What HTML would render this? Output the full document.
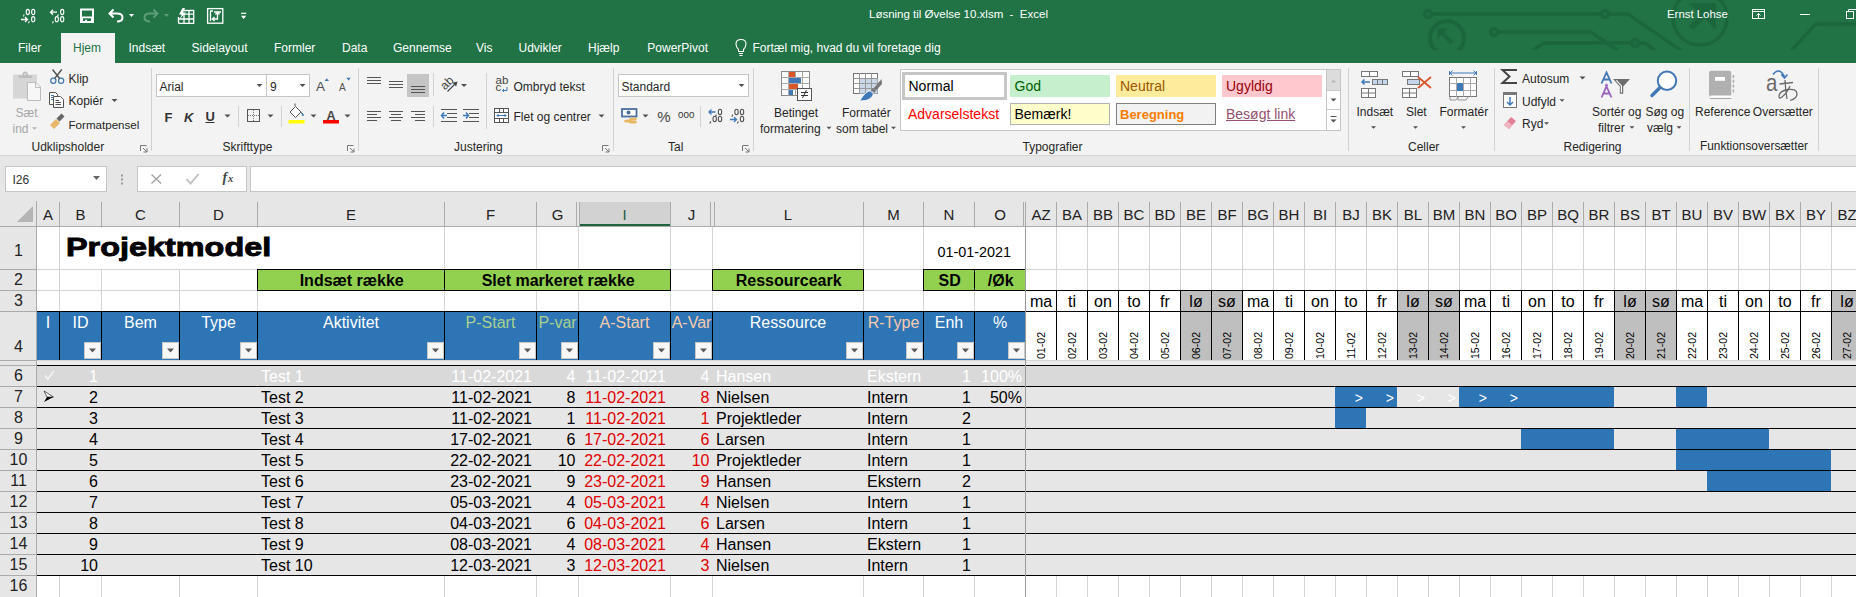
<!DOCTYPE html><html><head><meta charset="utf-8"><style>
html,body{margin:0;padding:0;}
body{width:1856px;height:597px;overflow:hidden;position:relative;font-family:"Liberation Sans", sans-serif;background:#fff;}
div{box-sizing:border-box;}
svg{position:absolute;overflow:visible;}
</style></head><body>
<div style="position:absolute;left:0px;top:0px;width:1856px;height:63px;background:#217346;"></div>
<svg style="left:0;top:0" width="1856" height="63" viewBox="0 0 1856 63">
<defs><clipPath id="cp"><rect x="0" y="0" width="1856" height="50"/></clipPath></defs>
<g clip-path="url(#cp)" fill="none" stroke="#1c663d" stroke-width="3.4">
<polyline points="1428,14 1605,14 1628,14 1683,52"/>
<circle cx="1428" cy="14" r="3.5" fill="#217346"/>
<circle cx="1605" cy="14" r="3.5" fill="#217346"/>
<circle cx="1447" cy="38" r="17" stroke-width="4"/>
<path d="M1440 31 L1452 43" stroke-width="4"/><path d="M1437.5 28.5 H1448 L1437.5 39 Z" fill="#1c663d" stroke="none"/>
<polyline points="1494,32 1591,32 1620,52"/>
<circle cx="1494" cy="32" r="3.5" fill="#217346"/>
<polyline points="1530,52 1544,43 1635,43 1645,43 1657,52"/>
<circle cx="1635" cy="43" r="3.5" fill="#217346"/>
<circle cx="1700" cy="18" r="27"/>
<path d="M1689 3 H1716 V30 Z" fill="#1c663d" stroke="none"/><path d="M1704 15 L1691 28" stroke-width="6"/>
<polyline points="1790,52 1816,24 1856,24"/>
</g></svg>
<svg style="left:0;top:0" width="260" height="32" viewBox="0 0 260 32">
<g fill="none" stroke="#ffffff" stroke-width="1.1">
<ellipse cx="27.8" cy="12" rx="1.6" ry="2.6"/><ellipse cx="33.2" cy="12" rx="1.6" ry="2.6"/>
<path d="M24.3 14.5 Q23.5 15.5 23.5 16.5"/>
<path d="M21 19.5 H27.5 M25 17 L27.5 19.5 L25 22" stroke-width="1.3"/>
<path d="M29.5 21.3 Q28.5 22.5 28.5 23.3"/>
<ellipse cx="33.2" cy="19.2" rx="1.6" ry="2.6"/>
<path d="M57 12.2 H50.5 M53 9.7 L50.5 12.2 L53 14.7" stroke-width="1.3"/>
<ellipse cx="62.2" cy="12" rx="1.6" ry="2.6"/>
<path d="M58.5 14.5 Q57.5 15.5 57.5 16.5"/>
<path d="M53.5 21.3 Q52.5 22.5 52.5 23.3"/>
<ellipse cx="56.8" cy="19.2" rx="1.6" ry="2.6"/><ellipse cx="62.2" cy="19.2" rx="1.6" ry="2.6"/>
<path d="M80 8.6 H94 V23 H80 Z M82 10.6 V16.4 H92 V10.6 M83 21 V18.2 H91 V21 M85 21 V19.8 H87 V21" fill="#ffffff" fill-rule="evenodd" stroke="none"/>
<path d="M113.5 9.5 L109.5 13.5 L113.5 17.5 M110 13.5 H117 Q122.5 13.5 122.5 17.5 Q122.5 21.5 117 21.5" stroke-width="2"/>
<path d="M129 14 H134 L131.5 17 Z" fill="#ffffff" stroke="none"/>
<path d="M153.5 9.5 L157.5 13.5 L153.5 17.5 M157 13.5 H150 Q144.5 13.5 144.5 17.5 Q144.5 21.5 150 21.5" stroke="#5d9c78" stroke-width="2"/>
<path d="M164 14 H169 L166.5 17 Z" fill="#5d9c78" stroke="none"/>
<path d="M178.5 23.3 V17 M183 10.5 H193.7 V23.3 H178.5 M181 14.1 H193.7 M178.5 19 H193.7 M184 14 V23.3 M189 10.5 V23.3" stroke-width="1.3"/>
<path d="M182.5 8 L179 14.5 H182 L179 20 L186 12.5 H183 L185 8 Z" fill="#ffffff" stroke="none"/>
<rect x="207.6" y="8.6" width="15.2" height="14.6" stroke-width="1.3"/>
<path d="M210.5 11 V21 M210 11 H213 M214 12 H221 M217.5 12 V19 H212.5 M215.5 14.5 L217.5 12 L219.5 14.5 M214.5 17 L212.3 19 L214.5 21" stroke-width="1.3"/>
<path d="M241 13.3 H246.3" stroke-width="1.2"/>
<path d="M241 15.7 H246.3 L243.65 19 Z" fill="#ffffff" stroke="none"/>
</g></svg>
<div style="position:absolute;left:869px;top:9.27px;font-size:11.5px;line-height:11.5px;color:#ffffff;white-space:nowrap;">Løsning til Øvelse 10.xlsm&nbsp; - &nbsp;Excel</div>
<div style="position:absolute;left:1667px;top:9.35px;font-size:11.4px;line-height:11.4px;color:#ffffff;white-space:nowrap;">Ernst Lohse</div>
<svg style="left:1740px;top:0px" width="116" height="32" viewBox="1740 0 116 32">
<g fill="none" stroke="#ffffff" stroke-width="1">
<rect x="1752.5" y="9.5" width="12" height="9"/>
<path d="M1752.5 11.5 H1764.5 M1758.5 18.5 V13.5 M1756.5 15.5 L1758.5 13.5 L1760.5 15.5"/>
<path d="M1800 14.5 H1810"/>
<rect x="1846.5" y="11.5" width="7" height="7"/>
<path d="M1848.5 11.5 V9.5 H1856"/>
</g></svg>
<div style="position:absolute;left:61px;top:33px;width:54px;height:30px;background:#f3f3f3;"></div>
<div style="position:absolute;left:18px;top:41.84px;font-size:12px;line-height:12px;color:#ffffff;white-space:nowrap;">Filer</div>
<div style="position:absolute;left:73px;top:41.84px;font-size:12px;line-height:12px;color:#217346;white-space:nowrap;">Hjem</div>
<div style="position:absolute;left:128.5px;top:41.84px;font-size:12px;line-height:12px;color:#ffffff;white-space:nowrap;">Indsæt</div>
<div style="position:absolute;left:191.5px;top:41.84px;font-size:12px;line-height:12px;color:#ffffff;white-space:nowrap;">Sidelayout</div>
<div style="position:absolute;left:274px;top:41.84px;font-size:12px;line-height:12px;color:#ffffff;white-space:nowrap;">Formler</div>
<div style="position:absolute;left:342px;top:41.84px;font-size:12px;line-height:12px;color:#ffffff;white-space:nowrap;">Data</div>
<div style="position:absolute;left:393px;top:41.84px;font-size:12px;line-height:12px;color:#ffffff;white-space:nowrap;">Gennemse</div>
<div style="position:absolute;left:476px;top:41.84px;font-size:12px;line-height:12px;color:#ffffff;white-space:nowrap;">Vis</div>
<div style="position:absolute;left:518.5px;top:41.84px;font-size:12px;line-height:12px;color:#ffffff;white-space:nowrap;">Udvikler</div>
<div style="position:absolute;left:588px;top:41.84px;font-size:12px;line-height:12px;color:#ffffff;white-space:nowrap;">Hjælp</div>
<div style="position:absolute;left:647.3px;top:41.84px;font-size:12px;line-height:12px;color:#ffffff;white-space:nowrap;">PowerPivot</div>
<svg style="left:731.5px;top:36px" width="20" height="22" viewBox="0 0 20 22">
<g fill="none" stroke="#ffffff" stroke-width="1.1">
<path d="M6.5 13.5 Q4 11 4 8 Q4 3.5 9 3.5 Q14 3.5 14 8 Q14 11 11.5 13.5 V15.5 H6.5 Z"/>
<path d="M7 17.5 H11 M7.5 19.5 H10.5"/>
</g></svg>
<div style="position:absolute;left:752.5px;top:41.84px;font-size:12px;line-height:12px;color:#ffffff;white-space:nowrap;">Fortæl mig, hvad du vil foretage dig</div>
<div style="position:absolute;left:0px;top:63px;width:1856px;height:92px;background:#f3f3f3;"></div>
<div style="position:absolute;left:0px;top:155px;width:1856px;height:1px;background:#d5d5d5;"></div>
<div style="position:absolute;left:15.5px;top:107.34px;font-size:12px;line-height:12px;color:#a6a6a6;white-space:nowrap;">Sæt</div>
<div style="position:absolute;left:12.5px;top:123.34px;font-size:12px;line-height:12px;color:#a6a6a6;white-space:nowrap;">ind</div>
<div style="position:absolute;left:68.5px;top:72.84px;font-size:12px;line-height:12px;color:#262626;white-space:nowrap;">Klip</div>
<div style="position:absolute;left:68.5px;top:95.34px;font-size:12px;line-height:12px;color:#262626;white-space:nowrap;">Kopiér</div>
<div style="position:absolute;left:68.5px;top:119.18px;font-size:11.6px;line-height:11.6px;color:#262626;white-space:nowrap;">Formatpensel</div>
<div style="position:absolute;left:31.5px;top:141.34px;font-size:12px;line-height:12px;color:#262626;white-space:nowrap;">Udklipsholder</div>
<div style="position:absolute;left:151px;top:68px;width:1px;height:83px;background:#d2d2d2;"></div>
<div style="position:absolute;left:156px;top:74px;width:154px;height:23px;background:#fff;border:1px solid #c6c6c6;"></div>
<div style="position:absolute;left:266px;top:74px;width:1px;height:23px;background:#c6c6c6;"></div>
<div style="position:absolute;left:159.5px;top:80.84px;font-size:12px;line-height:12px;color:#262626;white-space:nowrap;">Arial</div>
<div style="position:absolute;left:270px;top:80.84px;font-size:12px;line-height:12px;color:#262626;white-space:nowrap;">9</div>
<div style="position:absolute;left:316px;top:80.27px;font-size:13.5px;line-height:13.5px;color:#505050;white-space:nowrap;">A</div>
<div style="position:absolute;left:339px;top:83.23px;font-size:10px;line-height:10px;color:#505050;white-space:nowrap;">A</div>
<div style="position:absolute;left:164.5px;top:110.50px;font-size:13px;line-height:13px;color:#333;white-space:nowrap;font-weight:bold;">F</div>
<div style="position:absolute;left:184px;top:110.50px;font-size:13px;line-height:13px;color:#333;white-space:nowrap;font-weight:bold;font-style:italic;">K</div>
<div style="position:absolute;left:205.5px;top:109.50px;font-size:13px;line-height:13px;color:#333;white-space:nowrap;font-weight:bold;">U</div>
<div style="position:absolute;left:238px;top:106px;width:1px;height:21px;background:#d2d2d2;"></div>
<div style="position:absolute;left:281px;top:106px;width:1px;height:21px;background:#d2d2d2;"></div>
<div style="position:absolute;left:326.5px;top:109.72px;font-size:12.5px;line-height:12.5px;color:#444;white-space:nowrap;font-weight:bold;">A</div>
<div style="position:absolute;left:222.5px;top:141.34px;font-size:12px;line-height:12px;color:#262626;white-space:nowrap;">Skrifttype</div>
<div style="position:absolute;left:358px;top:68px;width:1px;height:83px;background:#d2d2d2;"></div>
<div style="position:absolute;left:433px;top:73px;width:1px;height:23px;background:#d2d2d2;"></div>
<div style="position:absolute;left:434.5px;top:77px;width:24px;height:12px;line-height:12px;font-size:12px;text-align:center;color:#444;transform:rotate(-45deg);white-space:nowrap;">ab</div>
<div style="position:absolute;left:486px;top:73px;width:1px;height:56px;background:#d2d2d2;"></div>
<div style="position:absolute;left:495.5px;top:74.57px;font-size:11.5px;line-height:11.5px;color:#444;white-space:nowrap;">ab</div>
<div style="position:absolute;left:495.5px;top:82.27px;font-size:11.5px;line-height:11.5px;color:#444;white-space:nowrap;">c</div>
<div style="position:absolute;left:513.5px;top:81.34px;font-size:12px;line-height:12px;color:#262626;white-space:nowrap;">Ombryd tekst</div>
<div style="position:absolute;left:433px;top:106px;width:1px;height:21px;background:#d2d2d2;"></div>
<div style="position:absolute;left:513.5px;top:111.34px;font-size:12px;line-height:12px;color:#262626;white-space:nowrap;">Flet og centrer</div>
<div style="position:absolute;left:454px;top:141.34px;font-size:12px;line-height:12px;color:#262626;white-space:nowrap;">Justering</div>
<div style="position:absolute;left:613px;top:68px;width:1px;height:83px;background:#d2d2d2;"></div>
<div style="position:absolute;left:618px;top:74px;width:131px;height:23px;background:#fff;border:1px solid #c6c6c6;"></div>
<div style="position:absolute;left:621.5px;top:80.84px;font-size:12px;line-height:12px;color:#262626;white-space:nowrap;">Standard</div>
<div style="position:absolute;left:657.3px;top:108.80px;font-size:15px;line-height:15px;color:#444;white-space:nowrap;">%</div>
<div style="position:absolute;left:678px;top:110.30px;font-size:9.8px;line-height:9.8px;color:#333;white-space:nowrap;">000</div>
<div style="position:absolute;left:700px;top:106px;width:1px;height:21px;background:#d2d2d2;"></div>
<div style="position:absolute;left:668px;top:141.34px;font-size:12px;line-height:12px;color:#262626;white-space:nowrap;">Tal</div>
<div style="position:absolute;left:753px;top:68px;width:1px;height:83px;background:#d2d2d2;"></div>
<div style="position:absolute;left:774px;top:106.84px;font-size:12px;line-height:12px;color:#262626;white-space:nowrap;">Betinget</div>
<div style="position:absolute;left:760px;top:122.84px;font-size:12px;line-height:12px;color:#262626;white-space:nowrap;">formatering</div>
<div style="position:absolute;left:842px;top:106.84px;font-size:12px;line-height:12px;color:#262626;white-space:nowrap;">Formatér</div>
<div style="position:absolute;left:836px;top:122.84px;font-size:12px;line-height:12px;color:#262626;white-space:nowrap;">som tabel</div>
<div style="position:absolute;left:900px;top:69px;width:441px;height:62px;background:#fff;border:1px solid #c6c6c6;"></div>
<div style="position:absolute;left:902px;top:72px;width:105px;height:28px;background:#fff;border:3px solid #c6c6c6;"></div>
<div style="position:absolute;left:908.5px;top:79.15px;font-size:14px;line-height:14px;color:#000;white-space:nowrap;">Normal</div>
<div style="position:absolute;left:1010px;top:75px;width:100px;height:22px;background:#c6efce;"></div>
<div style="position:absolute;left:1014.5px;top:79.15px;font-size:14px;line-height:14px;color:#006100;white-space:nowrap;">God</div>
<div style="position:absolute;left:1116px;top:75px;width:100px;height:22px;background:#ffeb9c;"></div>
<div style="position:absolute;left:1120px;top:79.15px;font-size:14px;line-height:14px;color:#9c5700;white-space:nowrap;">Neutral</div>
<div style="position:absolute;left:1222px;top:75px;width:100px;height:22px;background:#ffc7ce;"></div>
<div style="position:absolute;left:1226px;top:79.15px;font-size:14px;line-height:14px;color:#9c0006;white-space:nowrap;">Ugyldig</div>
<div style="position:absolute;left:908px;top:106.65px;font-size:14px;line-height:14px;color:#ff0000;white-space:nowrap;">Advarselstekst</div>
<div style="position:absolute;left:1010px;top:103px;width:100px;height:22px;background:#ffffcc;border:1px solid #b2b2b2;"></div>
<div style="position:absolute;left:1014.5px;top:106.65px;font-size:14px;line-height:14px;color:#000;white-space:nowrap;">Bemærk!</div>
<div style="position:absolute;left:1116px;top:103px;width:100px;height:22px;background:#f2f2f2;border:1px solid #7f7f7f;"></div>
<div style="position:absolute;left:1120px;top:107.50px;font-size:13px;line-height:13px;color:#fa7d00;white-space:nowrap;font-weight:bold;">Beregning</div>
<div style="position:absolute;left:1226px;top:106.65px;font-size:14px;line-height:14px;color:#954f72;white-space:nowrap;text-decoration:underline;">Besøgt link</div>
<div style="position:absolute;left:1326px;top:69px;width:15px;height:62px;background:#fff;border:1px solid #c6c6c6;"></div>
<div style="position:absolute;left:1327px;top:70px;width:13px;height:21px;background:#dcdcdc;"></div>
<div style="position:absolute;left:1326px;top:90px;width:15px;height:1px;background:#c6c6c6;"></div>
<div style="position:absolute;left:1326px;top:109px;width:15px;height:1px;background:#c6c6c6;"></div>
<div style="position:absolute;left:1022.5px;top:141.34px;font-size:12px;line-height:12px;color:#262626;white-space:nowrap;">Typografier</div>
<div style="position:absolute;left:1348px;top:68px;width:1px;height:83px;background:#d2d2d2;"></div>
<div style="position:absolute;left:1356.5px;top:106.34px;font-size:12px;line-height:12px;color:#262626;white-space:nowrap;">Indsæt</div>
<div style="position:absolute;left:1406px;top:106.34px;font-size:12px;line-height:12px;color:#262626;white-space:nowrap;">Slet</div>
<div style="position:absolute;left:1439.5px;top:106.34px;font-size:12px;line-height:12px;color:#262626;white-space:nowrap;">Formatér</div>
<div style="position:absolute;left:1408px;top:141.34px;font-size:12px;line-height:12px;color:#262626;white-space:nowrap;">Celler</div>
<div style="position:absolute;left:1494px;top:68px;width:1px;height:83px;background:#d2d2d2;"></div>
<div style="position:absolute;left:1522px;top:72.84px;font-size:12px;line-height:12px;color:#262626;white-space:nowrap;">Autosum</div>
<div style="position:absolute;left:1522px;top:95.84px;font-size:12px;line-height:12px;color:#262626;white-space:nowrap;">Udfyld</div>
<div style="position:absolute;left:1522px;top:118.34px;font-size:12px;line-height:12px;color:#262626;white-space:nowrap;">Ryd</div>
<div style="position:absolute;left:1592px;top:106.34px;font-size:12px;line-height:12px;color:#262626;white-space:nowrap;">Sortér og</div>
<div style="position:absolute;left:1598px;top:122.34px;font-size:12px;line-height:12px;color:#262626;white-space:nowrap;">filtrer</div>
<div style="position:absolute;left:1645.5px;top:106.34px;font-size:12px;line-height:12px;color:#262626;white-space:nowrap;">Søg og</div>
<div style="position:absolute;left:1647px;top:122.34px;font-size:12px;line-height:12px;color:#262626;white-space:nowrap;">vælg</div>
<div style="position:absolute;left:1563.5px;top:141.34px;font-size:12px;line-height:12px;color:#262626;white-space:nowrap;">Redigering</div>
<div style="position:absolute;left:1689px;top:68px;width:1px;height:83px;background:#d2d2d2;"></div>
<div style="position:absolute;left:1695px;top:106.34px;font-size:12px;line-height:12px;color:#262626;white-space:nowrap;">Reference</div>
<div style="position:absolute;left:1765.5px;top:70.68px;font-size:24px;line-height:24px;color:#6a6a6a;white-space:nowrap;font-weight:normal;transform:scaleX(0.85);transform-origin:left;">a</div>
<div style="position:absolute;left:1752.8px;top:106.34px;font-size:12px;line-height:12px;color:#262626;white-space:nowrap;">Oversætter</div>
<div style="position:absolute;left:1700px;top:141.47px;font-size:11.85px;line-height:11.85px;color:#262626;white-space:nowrap;">Funktionsoversætter</div>
<div style="position:absolute;left:1818px;top:68px;width:1px;height:83px;background:#d2d2d2;"></div>
<svg style="left:0;top:0" width="1856" height="160" viewBox="0 0 1856 160"><rect x="13" y="74.5" width="24" height="24" fill="#d6d6d6"/><path d="M18.5 78 V75.5 H22.5 Q22.5 71.5 25.2 71.5 Q28 71.5 28 75.5 H32 V78 Z" fill="#bdbdbd"/><circle cx="25.2" cy="74.2" r="1" fill="#e6e6e6"/><path d="M27.5 82.5 H36 L40.5 87 V100.5 H27.5 Z" fill="#f7f7f7" stroke="#bdbdbd"/><path d="M35.5 82.5 V87.5 H40.5" fill="none" stroke="#bdbdbd"/><path d="M32.0 127.25 H37.0 L34.5 129.75 Z" fill="#b0b0b0" stroke="none"/><circle cx="53.3" cy="80.8" r="2.6" fill="none" stroke="#4277b5" stroke-width="1.2"/><circle cx="61.1" cy="80.8" r="2.6" fill="none" stroke="#4277b5" stroke-width="1.2"/><path d="M52.5 69.5 L59.5 78.3 M61.8 69.5 L54.8 78.3" stroke="#505050" stroke-width="1.4"/><path d="M49.5 92.5 H55.5 L57.5 94.5 V104.5 H49.5 Z" fill="#fff" stroke="#555"/><path d="M51 95.5 H54 M51 97.5 H55 M51 99.5 H55" stroke="#3f79b8"/><path d="M53.5 96.5 H60.5 L63.5 99.5 V107.5 H53.5 Z" fill="#fff" stroke="#555"/><path d="M55.5 100.5 H59 M55.5 102.5 H61 M55.5 104.5 H61" stroke="#555"/><path d="M111.5 99.0 H117.5 L114.5 102.0 Z" fill="#505050" stroke="none"/><path d="M50 125 L56 119 L60 123 L54 129 Z" fill="#e6b867"/><path d="M56.5 118.5 L61.5 113.5 L64.5 116.5 L59.5 121.5 Z" fill="#666"/><path d="M140.5 151 V145.5 H146.5 M143 148 L147 152 M147 148.5 V152 H143.5" stroke="#777" stroke-width="1" fill="none"/><path d="M256.5 84.0 H262.5 L259.5 87.0 Z" fill="#505050" stroke="none"/><path d="M299.5 84.0 H305.5 L302.5 87.0 Z" fill="#505050" stroke="none"/><path d="M324.5 81 H329 L326.75 78.3 Z" fill="#4277b5"/><path d="M346.3 77.8 H350.8 L348.55 80.5 Z" fill="#4277b5"/><path d="M205.5 122.5 H214.5" stroke="#333" stroke-width="1"/><path d="M224.5 114.5 H230.5 L227.5 117.5 Z" fill="#505050" stroke="none"/><rect x="247.5" y="109.5" width="12" height="12" fill="none" stroke="#555"/><path d="M253.5 110 V121 M248 115.5 H259" stroke="#777" stroke-width="1" stroke-dasharray="1 1"/><path d="M267.5 114.5 H273.5 L270.5 117.5 Z" fill="#505050" stroke="none"/><path d="M290 112 L295.5 106.5 L301 112 L295.5 117.5 Z" fill="#fff" stroke="#555"/><path d="M295 106 V103.5" stroke="#555"/><path d="M301.5 112.5 Q304 114 303 116 Q302 114 301.5 112.5 Z" fill="#3f79b8" stroke="#3f79b8"/><rect x="288.5" y="120" width="16" height="3.5" fill="#ffff00"/><path d="M310.5 114.5 H316.5 L313.5 117.5 Z" fill="#505050" stroke="none"/><rect x="323" y="120" width="16" height="3.5" fill="#ff0000"/><path d="M344.5 114.5 H350.5 L347.5 117.5 Z" fill="#505050" stroke="none"/><path d="M347.5 151 V145.5 H353.5 M350 148 L354 152 M354 148.5 V152 H350.5" stroke="#777" stroke-width="1" fill="none"/><path d="M367 77.5 H381" stroke="#555" stroke-width="1"/><path d="M367 80.5 H381" stroke="#555" stroke-width="1"/><path d="M367 83.5 H381" stroke="#555" stroke-width="1"/><path d="M389 81.5 H403" stroke="#555" stroke-width="1"/><path d="M389 84.5 H403" stroke="#555" stroke-width="1"/><path d="M389 87.5 H403" stroke="#555" stroke-width="1"/><rect x="407" y="74" width="22" height="23" fill="#c5c5c5"/><path d="M411 86.5 H425" stroke="#555" stroke-width="1"/><path d="M411 89.5 H425" stroke="#555" stroke-width="1"/><path d="M411 92.5 H425" stroke="#555" stroke-width="1"/><path d="M447.5 91.5 L456 83" stroke="#444" stroke-width="1.1" fill="none"/><path d="M457.5 81.5 L452.5 82.8 L456.2 86.5 Z" fill="#444"/><path d="M461.0 84.0 H467.0 L464 87.0 Z" fill="#505050" stroke="none"/><path d="M507 87 V90.5 H502.5 M504 89 L502.5 90.5 L504 92" stroke="#3f79b8" fill="none"/><path d="M367 111.5 H381 M367 114.5 H377 M367 117.5 H381 M367 120.5 H377" stroke="#555"/><path d="M389 111.5 H403 M391 114.5 H401 M389 117.5 H403 M391 120.5 H401" stroke="#555"/><path d="M411 111.5 H425 M415 114.5 H425 M411 117.5 H425 M415 120.5 H425" stroke="#555"/><path d="M441 109.5 H457 M447 113.5 H457 M447 117.5 H457 M441 121.5 H457" stroke="#555"/><path d="M441.5 115.5 H447 M444 112.5 L441.5 115.5 L444 118.5" stroke="#3f79b8" stroke-width="1.5" fill="none"/><path d="M463 109.5 H479 M469 113.5 H479 M469 117.5 H479 M463 121.5 H479" stroke="#555"/><path d="M463 115.5 H468.5 M466 112.5 L468.5 115.5 L466 118.5" stroke="#3f79b8" stroke-width="1.5" fill="none"/><rect x="494.5" y="108.5" width="14" height="14" fill="#fff" stroke="#555"/><path d="M494.5 112.5 H508.5 M494.5 118.5 H508.5 M499.5 108.5 V112.5 M503.5 108.5 V112.5 M499.5 118.5 V122.5 M503.5 118.5 V122.5" stroke="#555"/><path d="M497 115.5 H506 M498.5 114 L497 115.5 L498.5 117 M504.5 114 L506 115.5 L504.5 117" stroke="#3f79b8" fill="none"/><path d="M598.5 114.5 H604.5 L601.5 117.5 Z" fill="#505050" stroke="none"/><path d="M602.5 151 V145.5 H608.5 M605 148 L609 152 M609 148.5 V152 H605.5" stroke="#777" stroke-width="1" fill="none"/><path d="M738.5 84.0 H744.5 L741.5 87.0 Z" fill="#505050" stroke="none"/><rect x="622" y="109" width="14.5" height="7.5" fill="#fff" stroke="#4a6f9c" stroke-width="1.8"/><circle cx="628.5" cy="112.5" r="2" fill="#4a6f9c"/><ellipse cx="633" cy="119" rx="4" ry="1.6" fill="#e8b863"/><ellipse cx="633" cy="122" rx="4" ry="1.6" fill="#e8b863"/><ellipse cx="628" cy="121" rx="4" ry="1.6" fill="#e8b863"/><path d="M642.5 114.5 H648.5 L645.5 117.5 Z" fill="#505050" stroke="none"/><path d="M715.5 112 H709 M711.5 109.5 L709 112 L711.5 114.5" stroke="#3f79b8" stroke-width="1.3" fill="none"/><ellipse cx="720" cy="112" rx="1.7" ry="2.7" fill="none" stroke="#555" stroke-width="1.1"/><path d="M716.5 114.6 Q715.5 115.8 715.5 116.8" fill="none" stroke="#555" stroke-width="1.1"/><path d="M711 121.3 Q710 122.5 710 123.5" fill="none" stroke="#555" stroke-width="1.1"/><ellipse cx="714.7" cy="119" rx="1.7" ry="2.7" fill="none" stroke="#555" stroke-width="1.1"/><ellipse cx="720" cy="119" rx="1.7" ry="2.7" fill="none" stroke="#555" stroke-width="1.1"/><path d="M733 114.6 Q732 115.8 732 116.8" fill="none" stroke="#555" stroke-width="1.1"/><ellipse cx="736.5" cy="112" rx="1.7" ry="2.7" fill="none" stroke="#555" stroke-width="1.1"/><ellipse cx="742" cy="112" rx="1.7" ry="2.7" fill="none" stroke="#555" stroke-width="1.1"/><path d="M730 119.5 H736.5 M734 117 L736.5 119.5 L734 122" stroke="#3f79b8" stroke-width="1.3" fill="none"/><path d="M738.5 121.3 Q737.5 122.5 737.5 123.5" fill="none" stroke="#555" stroke-width="1.1"/><ellipse cx="742" cy="119" rx="1.7" ry="2.7" fill="none" stroke="#555" stroke-width="1.1"/><path d="M742.5 151 V145.5 H748.5 M745 148 L749 152 M749 148.5 V152 H745.5" stroke="#777" stroke-width="1" fill="none"/><rect x="781.5" y="71.5" width="28" height="24" fill="#fff" stroke="#888"/><path d="M781.5 77.5 H809.5 M781.5 83.5 H809.5 M781.5 89.5 H809.5 M788.5 71.5 V95.5 M795.5 71.5 V95.5 M802.5 71.5 V95.5" stroke="#aaa"/><rect x="789" y="72" width="6" height="5" fill="#d9572b"/><rect x="789" y="78" width="12" height="5" fill="#3f79b8"/><rect x="789" y="84" width="9" height="5" fill="#d9572b"/><rect x="789" y="90" width="4" height="5" fill="#3f79b8"/><rect x="797.5" y="88.5" width="14" height="12" fill="#fff" stroke="#555"/><path d="M801 92.5 H808 M801 95.5 H808 M806.5 90 L802.5 98" stroke="#333" stroke-width="1"/><path d="M826.5 126.75 H831.5 L829 129.25 Z" fill="#505050" stroke="none"/><rect x="853.5" y="73.5" width="24" height="20" fill="#fff" stroke="#777"/><rect x="859.5" y="78.5" width="18" height="15" fill="#c9d7e8"/><path d="M853.5 78.5 H877.5 M853.5 83.5 H877.5 M853.5 88.5 H877.5 M859.5 73.5 V93.5 M865.5 73.5 V93.5 M871.5 73.5 V93.5" stroke="#999"/><path d="M881.5 79 L882 84 L876 90.5 L873.5 88.5 Z" fill="#777"/><path d="M873 88 L876 91 L874 93 L871 90 Z" fill="#777"/><path d="M870.5 91 L873.5 94 Q872 98.5 866 100.5 L859.5 101 Q863 95 866.5 92.5 Q868.5 90.5 870.5 91 Z" fill="#3f79b8" stroke="#fff" stroke-width=".8"/><path d="M891.0 126.75 H896.0 L893.5 129.25 Z" fill="#505050" stroke="none"/><path d="M1330.5 82.5 H1336.5 L1333.5 79.5 Z" fill="#bbb"/><path d="M1330.5 98.5 H1336.5 L1333.5 101.5 Z" fill="#555" stroke="none"/><path d="M1330.5 116.5 H1336.5" stroke="#555"/><path d="M1330.5 119.5 H1336.5 L1333.5 122.5 Z" fill="#555" stroke="none"/><rect x="1361.5" y="71.5" width="16" height="5" fill="#fff" stroke="#777"/><path d="M1369.5 71 V77" stroke="#777"/><rect x="1372.5" y="79.5" width="15" height="5" fill="#c5d6ea" stroke="#777"/><path d="M1377.5 79.5 V84.5 M1382.5 79.5 V84.5" stroke="#777"/><path d="M1362 82 H1370 M1364.5 79.5 L1362 82 L1364.5 84.5" stroke="#3f79b8" stroke-width="1.5" fill="none"/><rect x="1361.5" y="88.5" width="14" height="9" fill="#fff" stroke="#777"/><path d="M1361.5 93 H1375.5 M1368.5 88.5 V97.5" stroke="#777"/><path d="M1371.0 126.25 H1376.0 L1373.5 128.75 Z" fill="#505050" stroke="none"/><rect x="1402.5" y="71.5" width="16" height="5" fill="#fff" stroke="#777"/><path d="M1410.5 71 V77" stroke="#777"/><rect x="1407.5" y="79.5" width="12" height="5" fill="#c5d6ea" stroke="#777"/><rect x="1402.5" y="88.5" width="14" height="9" fill="#fff" stroke="#777"/><path d="M1402.5 93 H1416.5 M1409.5 88.5 V97.5" stroke="#777"/><path d="M1418 77 L1431 88 M1431 77 L1418 88" stroke="#d9572b" stroke-width="1.8"/><path d="M1413.0 126.25 H1418.0 L1415.5 128.75 Z" fill="#505050" stroke="none"/><path d="M1449.5 71 V75 M1476.5 71 V75 M1450 73 H1476 M1452.5 70.5 L1450 73 L1452.5 75.5 M1473.5 70.5 L1476 73 L1473.5 75.5" stroke="#3f79b8" fill="none"/><rect x="1449.5" y="77.5" width="27" height="19" fill="#fff" stroke="#777"/><path d="M1449.5 83.5 H1476.5 M1449.5 90.5 H1476.5 M1456.5 77.5 V96.5 M1463.5 77.5 V96.5 M1470.5 77.5 V96.5" stroke="#aaa"/><rect x="1457" y="83" width="6" height="8" fill="#3f79b8"/><path d="M1450 97 V100 H1456 L1458 97 M1458 97 V100 H1466 L1468 97" stroke="#999" fill="none"/><path d="M1461.0 126.25 H1466.0 L1463.5 128.75 Z" fill="#505050" stroke="none"/><path d="M1517 70 H1502.5 L1509.5 76.5 L1502.5 83 H1517" fill="none" stroke="#444" stroke-width="2"/><path d="M1579.5 76.5 H1585.5 L1582.5 79.5 Z" fill="#505050" stroke="none"/><rect x="1503.5" y="92.5" width="13" height="15" fill="#fff" stroke="#777"/><rect x="1503" y="92" width="14" height="3" fill="#777"/><path d="M1510 97 V105 M1507 102 L1510 105 L1513 102" stroke="#3f79b8" stroke-width="1.5" fill="none"/><path d="M1559.5 99.25 H1564.5 L1562 101.75 Z" fill="#505050" stroke="none"/><path d="M1504 125 L1511 117 L1516 121 L1509 129 Z" fill="#e37f94"/><path d="M1504 125 L1507.5 121 L1512 125 L1509 129 Z" fill="#f0b3c0"/><path d="M1544.0 122.25 H1549.0 L1546.5 124.75 Z" fill="#505050" stroke="none"/><path d="M1601.5 83.5 L1606.5 72.5 L1611.5 83.5 M1603.3 79.5 H1609.7" stroke="#4277b5" stroke-width="1.8" fill="none"/><path d="M1601.5 97.5 L1606.5 86.5 L1611.5 97.5 M1603.3 93.5 H1609.7" stroke="#9a62bf" stroke-width="1.8" fill="none"/><circle cx="1606.5" cy="85.2" r="1.1" fill="none" stroke="#9a62bf" stroke-width="1"/><path d="M1613 79 H1630 L1623.2 86.5 V93.7 H1619.8 V86.5 Z" fill="#6d6d6d"/><path d="M1615.5 80.3 L1620.8 86 V92.5 H1622 V85.7 L1617 80.3 Z" fill="#fff"/><path d="M1629.5 126.25 H1634.5 L1632 128.75 Z" fill="#505050" stroke="none"/><circle cx="1667" cy="80.8" r="9.2" fill="#fff" stroke="#4277b5" stroke-width="2"/><path d="M1660 87.5 L1652 95.5" stroke="#4277b5" stroke-width="3.4" stroke-linecap="round"/><path d="M1676.5 126.25 H1681.5 L1679 128.75 Z" fill="#505050" stroke="none"/><rect x="1709" y="70.7" width="22.2" height="26" rx="2" fill="#b0b0b0"/><path d="M1710.5 96.5 H1731.2" stroke="#fff" stroke-width="2"/><path d="M1710 98.5 H1731.2" stroke="#a8a8a8" stroke-width="1"/><rect x="1715" y="77" width="10" height="3.8" fill="#fff"/><path d="M1733.4 75 V94" stroke="#b0b0b0" stroke-width="1.6" stroke-dasharray="3 1.8"/><path d="M1779.5 84 L1793 82.5 M1785 80 Q1785.5 90 1787 99 M1790 86 Q1787 93 1782 97 Q1779 99.5 1779 96.5 Q1779 91 1788 89.5 Q1797 88.5 1797 94 Q1797 98.5 1790 100.5" stroke="#6a6a6a" stroke-width="1.3" fill="none"/><path d="M1773 74.5 Q1779 66.5 1784.5 76.5 M1781.3 74.5 L1784.5 78 L1787.5 74.5" stroke="#4277b5" stroke-width="1.5" fill="none"/></svg>
<div style="position:absolute;left:0px;top:156px;width:1856px;height:45px;background:#e6e6e6;"></div>
<div style="position:absolute;left:5px;top:166px;width:102px;height:26px;background:#fff;border:1px solid #c6c6c6;"></div>
<div style="position:absolute;left:12.5px;top:173.84px;font-size:12px;line-height:12px;color:#333;white-space:nowrap;">I26</div>
<div style="position:absolute;left:137px;top:166px;width:110px;height:26px;background:#fff;border:1px solid #c6c6c6;"></div>
<svg style="left:0px;top:155px" width="260" height="46" viewBox="0 155 260 46"><path d="M93 176 H100 L96.5 180 Z" fill="#666"/><rect x="121" y="174.5" width="2" height="2" fill="#999"/><rect x="121" y="178.5" width="2" height="2" fill="#999"/><rect x="121" y="182.5" width="2" height="2" fill="#999"/><path d="M151.5 174.5 L161 183.5 M161 174.5 L151.5 183.5" stroke="#a0a0a0" stroke-width="1.3"/><path d="M186.5 179 L190.5 183.5 L198.5 174" stroke="#c0c0c0" stroke-width="1.8" fill="none"/></svg>
<div style="position:absolute;left:222.5px;top:170.65px;font-size:14px;line-height:14px;color:#444;white-space:nowrap;font-family:'Liberation Serif';font-style:italic;font-weight:bold;">f</div>
<div style="position:absolute;left:228px;top:173.61px;font-size:10.5px;line-height:10.5px;color:#444;white-space:nowrap;font-family:'Liberation Serif';font-style:italic;font-weight:bold;">x</div>
<div style="position:absolute;left:250px;top:166px;width:1620px;height:26px;background:#fff;border:1px solid #c6c6c6;"></div>
<div style="position:absolute;left:37px;top:227px;width:1819px;height:370px;background:#fff;"></div>
<svg style="left:0;top:0" width="1856" height="597" viewBox="0 0 1856 597"><rect x="59" y="227" width="1" height="370" fill="#d4d4d4"/><rect x="101" y="227" width="1" height="370" fill="#d4d4d4"/><rect x="179" y="227" width="1" height="370" fill="#d4d4d4"/><rect x="257" y="227" width="1" height="370" fill="#d4d4d4"/><rect x="444" y="227" width="1" height="370" fill="#d4d4d4"/><rect x="536" y="227" width="1" height="370" fill="#d4d4d4"/><rect x="578" y="227" width="1" height="370" fill="#d4d4d4"/><rect x="670" y="227" width="1" height="370" fill="#d4d4d4"/><rect x="712" y="227" width="1" height="370" fill="#d4d4d4"/><rect x="863" y="227" width="1" height="370" fill="#d4d4d4"/><rect x="923" y="227" width="1" height="370" fill="#d4d4d4"/><rect x="974" y="227" width="1" height="370" fill="#d4d4d4"/><rect x="1025" y="227" width="1" height="370" fill="#d4d4d4"/><rect x="1056" y="227" width="1" height="370" fill="#d4d4d4"/><rect x="1087" y="227" width="1" height="370" fill="#d4d4d4"/><rect x="1118" y="227" width="1" height="370" fill="#d4d4d4"/><rect x="1149" y="227" width="1" height="370" fill="#d4d4d4"/><rect x="1180" y="227" width="1" height="370" fill="#d4d4d4"/><rect x="1211" y="227" width="1" height="370" fill="#d4d4d4"/><rect x="1242" y="227" width="1" height="370" fill="#d4d4d4"/><rect x="1273" y="227" width="1" height="370" fill="#d4d4d4"/><rect x="1304" y="227" width="1" height="370" fill="#d4d4d4"/><rect x="1335" y="227" width="1" height="370" fill="#d4d4d4"/><rect x="1366" y="227" width="1" height="370" fill="#d4d4d4"/><rect x="1397" y="227" width="1" height="370" fill="#d4d4d4"/><rect x="1428" y="227" width="1" height="370" fill="#d4d4d4"/><rect x="1459" y="227" width="1" height="370" fill="#d4d4d4"/><rect x="1490" y="227" width="1" height="370" fill="#d4d4d4"/><rect x="1521" y="227" width="1" height="370" fill="#d4d4d4"/><rect x="1552" y="227" width="1" height="370" fill="#d4d4d4"/><rect x="1583" y="227" width="1" height="370" fill="#d4d4d4"/><rect x="1614" y="227" width="1" height="370" fill="#d4d4d4"/><rect x="1645" y="227" width="1" height="370" fill="#d4d4d4"/><rect x="1676" y="227" width="1" height="370" fill="#d4d4d4"/><rect x="1707" y="227" width="1" height="370" fill="#d4d4d4"/><rect x="1738" y="227" width="1" height="370" fill="#d4d4d4"/><rect x="1769" y="227" width="1" height="370" fill="#d4d4d4"/><rect x="1800" y="227" width="1" height="370" fill="#d4d4d4"/><rect x="1831" y="227" width="1" height="370" fill="#d4d4d4"/><rect x="1862" y="227" width="1" height="370" fill="#d4d4d4"/><rect x="37" y="269" width="1819" height="1" fill="#d4d4d4"/><rect x="37" y="290" width="1819" height="1" fill="#d4d4d4"/><rect x="37" y="311" width="1819" height="1" fill="#d4d4d4"/><rect x="37" y="360" width="1819" height="1" fill="#d4d4d4"/><rect x="37" y="365" width="1819" height="1" fill="#d4d4d4"/><rect x="37" y="386" width="1819" height="1" fill="#d4d4d4"/><rect x="37" y="407" width="1819" height="1" fill="#d4d4d4"/><rect x="37" y="428" width="1819" height="1" fill="#d4d4d4"/><rect x="37" y="449" width="1819" height="1" fill="#d4d4d4"/><rect x="37" y="470" width="1819" height="1" fill="#d4d4d4"/><rect x="37" y="491" width="1819" height="1" fill="#d4d4d4"/><rect x="37" y="512" width="1819" height="1" fill="#d4d4d4"/><rect x="37" y="533" width="1819" height="1" fill="#d4d4d4"/><rect x="37" y="554" width="1819" height="1" fill="#d4d4d4"/><rect x="37" y="575" width="1819" height="1" fill="#d4d4d4"/><rect x="37" y="597" width="1819" height="1" fill="#d4d4d4"/></svg>
<div style="position:absolute;left:0px;top:201px;width:1856px;height:26px;background:#e6e6e6;"></div>
<div style="position:absolute;left:0px;top:226px;width:1856px;height:1px;background:#ababab;"></div>
<svg style="left:0;top:0" width="1856" height="597" viewBox="0 0 1856 597"><path d="M17 222 L33 206 V222 Z" fill="#b4b4b4"/><rect x="36" y="201" width="1" height="396" fill="#ababab"/><rect x="59" y="202" width="1" height="24" fill="#ababab"/><rect x="101" y="202" width="1" height="24" fill="#ababab"/><rect x="179" y="202" width="1" height="24" fill="#ababab"/><rect x="257" y="202" width="1" height="24" fill="#ababab"/><rect x="444" y="202" width="1" height="24" fill="#ababab"/><rect x="536" y="202" width="1" height="24" fill="#ababab"/><rect x="670" y="202" width="1" height="24" fill="#ababab"/><rect x="863" y="202" width="1" height="24" fill="#ababab"/><rect x="923" y="202" width="1" height="24" fill="#ababab"/><rect x="974" y="202" width="1" height="24" fill="#ababab"/><rect x="1056" y="202" width="1" height="24" fill="#ababab"/><rect x="1087" y="202" width="1" height="24" fill="#ababab"/><rect x="1118" y="202" width="1" height="24" fill="#ababab"/><rect x="1149" y="202" width="1" height="24" fill="#ababab"/><rect x="1180" y="202" width="1" height="24" fill="#ababab"/><rect x="1211" y="202" width="1" height="24" fill="#ababab"/><rect x="1242" y="202" width="1" height="24" fill="#ababab"/><rect x="1273" y="202" width="1" height="24" fill="#ababab"/><rect x="1304" y="202" width="1" height="24" fill="#ababab"/><rect x="1335" y="202" width="1" height="24" fill="#ababab"/><rect x="1366" y="202" width="1" height="24" fill="#ababab"/><rect x="1397" y="202" width="1" height="24" fill="#ababab"/><rect x="1428" y="202" width="1" height="24" fill="#ababab"/><rect x="1459" y="202" width="1" height="24" fill="#ababab"/><rect x="1490" y="202" width="1" height="24" fill="#ababab"/><rect x="1521" y="202" width="1" height="24" fill="#ababab"/><rect x="1552" y="202" width="1" height="24" fill="#ababab"/><rect x="1583" y="202" width="1" height="24" fill="#ababab"/><rect x="1614" y="202" width="1" height="24" fill="#ababab"/><rect x="1645" y="202" width="1" height="24" fill="#ababab"/><rect x="1676" y="202" width="1" height="24" fill="#ababab"/><rect x="1707" y="202" width="1" height="24" fill="#ababab"/><rect x="1738" y="202" width="1" height="24" fill="#ababab"/><rect x="1769" y="202" width="1" height="24" fill="#ababab"/><rect x="1800" y="202" width="1" height="24" fill="#ababab"/><rect x="1831" y="202" width="1" height="24" fill="#ababab"/><rect x="1862" y="202" width="1" height="24" fill="#ababab"/><rect x="576" y="202" width="1" height="24" fill="#ababab"/><rect x="579" y="202" width="1" height="24" fill="#ababab"/><rect x="710" y="202" width="1" height="24" fill="#ababab"/><rect x="714" y="202" width="1" height="24" fill="#ababab"/><rect x="1023" y="202" width="1" height="24" fill="#ababab"/><rect x="1025" y="202" width="1" height="24" fill="#ababab"/></svg>
<div style="position:absolute;left:580px;top:202px;width:90px;height:24px;background:#d2d2d2;"></div>
<div style="position:absolute;left:580px;top:224px;width:90px;height:2px;background:#1f6640;"></div>
<div style="position:absolute;left:-252.0px;width:600px;text-align:center;top:207.30px;font-size:15px;line-height:15px;color:#222;white-space:nowrap;">A</div>
<div style="position:absolute;left:-219.5px;width:600px;text-align:center;top:207.30px;font-size:15px;line-height:15px;color:#222;white-space:nowrap;">B</div>
<div style="position:absolute;left:-159.5px;width:600px;text-align:center;top:207.30px;font-size:15px;line-height:15px;color:#222;white-space:nowrap;">C</div>
<div style="position:absolute;left:-81.5px;width:600px;text-align:center;top:207.30px;font-size:15px;line-height:15px;color:#222;white-space:nowrap;">D</div>
<div style="position:absolute;left:51.0px;width:600px;text-align:center;top:207.30px;font-size:15px;line-height:15px;color:#222;white-space:nowrap;">E</div>
<div style="position:absolute;left:190.5px;width:600px;text-align:center;top:207.30px;font-size:15px;line-height:15px;color:#222;white-space:nowrap;">F</div>
<div style="position:absolute;left:257.5px;width:600px;text-align:center;top:207.30px;font-size:15px;line-height:15px;color:#222;white-space:nowrap;">G</div>
<div style="position:absolute;left:324.5px;width:600px;text-align:center;top:207.30px;font-size:15px;line-height:15px;color:#1d5b39;white-space:nowrap;">I</div>
<div style="position:absolute;left:391.5px;width:600px;text-align:center;top:207.30px;font-size:15px;line-height:15px;color:#222;white-space:nowrap;">J</div>
<div style="position:absolute;left:488.0px;width:600px;text-align:center;top:207.30px;font-size:15px;line-height:15px;color:#222;white-space:nowrap;">L</div>
<div style="position:absolute;left:593.5px;width:600px;text-align:center;top:207.30px;font-size:15px;line-height:15px;color:#222;white-space:nowrap;">M</div>
<div style="position:absolute;left:649.0px;width:600px;text-align:center;top:207.30px;font-size:15px;line-height:15px;color:#222;white-space:nowrap;">N</div>
<div style="position:absolute;left:700.0px;width:600px;text-align:center;top:207.30px;font-size:15px;line-height:15px;color:#222;white-space:nowrap;">O</div>
<div style="position:absolute;left:741.0px;width:600px;text-align:center;top:207.30px;font-size:15px;line-height:15px;color:#222;white-space:nowrap;">AZ</div>
<div style="position:absolute;left:772.0px;width:600px;text-align:center;top:207.30px;font-size:15px;line-height:15px;color:#222;white-space:nowrap;">BA</div>
<div style="position:absolute;left:803.0px;width:600px;text-align:center;top:207.30px;font-size:15px;line-height:15px;color:#222;white-space:nowrap;">BB</div>
<div style="position:absolute;left:834.0px;width:600px;text-align:center;top:207.30px;font-size:15px;line-height:15px;color:#222;white-space:nowrap;">BC</div>
<div style="position:absolute;left:865.0px;width:600px;text-align:center;top:207.30px;font-size:15px;line-height:15px;color:#222;white-space:nowrap;">BD</div>
<div style="position:absolute;left:896.0px;width:600px;text-align:center;top:207.30px;font-size:15px;line-height:15px;color:#222;white-space:nowrap;">BE</div>
<div style="position:absolute;left:927.0px;width:600px;text-align:center;top:207.30px;font-size:15px;line-height:15px;color:#222;white-space:nowrap;">BF</div>
<div style="position:absolute;left:958.0px;width:600px;text-align:center;top:207.30px;font-size:15px;line-height:15px;color:#222;white-space:nowrap;">BG</div>
<div style="position:absolute;left:989.0px;width:600px;text-align:center;top:207.30px;font-size:15px;line-height:15px;color:#222;white-space:nowrap;">BH</div>
<div style="position:absolute;left:1020.0px;width:600px;text-align:center;top:207.30px;font-size:15px;line-height:15px;color:#222;white-space:nowrap;">BI</div>
<div style="position:absolute;left:1051.0px;width:600px;text-align:center;top:207.30px;font-size:15px;line-height:15px;color:#222;white-space:nowrap;">BJ</div>
<div style="position:absolute;left:1082.0px;width:600px;text-align:center;top:207.30px;font-size:15px;line-height:15px;color:#222;white-space:nowrap;">BK</div>
<div style="position:absolute;left:1113.0px;width:600px;text-align:center;top:207.30px;font-size:15px;line-height:15px;color:#222;white-space:nowrap;">BL</div>
<div style="position:absolute;left:1144.0px;width:600px;text-align:center;top:207.30px;font-size:15px;line-height:15px;color:#222;white-space:nowrap;">BM</div>
<div style="position:absolute;left:1175.0px;width:600px;text-align:center;top:207.30px;font-size:15px;line-height:15px;color:#222;white-space:nowrap;">BN</div>
<div style="position:absolute;left:1206.0px;width:600px;text-align:center;top:207.30px;font-size:15px;line-height:15px;color:#222;white-space:nowrap;">BO</div>
<div style="position:absolute;left:1237.0px;width:600px;text-align:center;top:207.30px;font-size:15px;line-height:15px;color:#222;white-space:nowrap;">BP</div>
<div style="position:absolute;left:1268.0px;width:600px;text-align:center;top:207.30px;font-size:15px;line-height:15px;color:#222;white-space:nowrap;">BQ</div>
<div style="position:absolute;left:1299.0px;width:600px;text-align:center;top:207.30px;font-size:15px;line-height:15px;color:#222;white-space:nowrap;">BR</div>
<div style="position:absolute;left:1330.0px;width:600px;text-align:center;top:207.30px;font-size:15px;line-height:15px;color:#222;white-space:nowrap;">BS</div>
<div style="position:absolute;left:1361.0px;width:600px;text-align:center;top:207.30px;font-size:15px;line-height:15px;color:#222;white-space:nowrap;">BT</div>
<div style="position:absolute;left:1392.0px;width:600px;text-align:center;top:207.30px;font-size:15px;line-height:15px;color:#222;white-space:nowrap;">BU</div>
<div style="position:absolute;left:1423.0px;width:600px;text-align:center;top:207.30px;font-size:15px;line-height:15px;color:#222;white-space:nowrap;">BV</div>
<div style="position:absolute;left:1454.0px;width:600px;text-align:center;top:207.30px;font-size:15px;line-height:15px;color:#222;white-space:nowrap;">BW</div>
<div style="position:absolute;left:1485.0px;width:600px;text-align:center;top:207.30px;font-size:15px;line-height:15px;color:#222;white-space:nowrap;">BX</div>
<div style="position:absolute;left:1516.0px;width:600px;text-align:center;top:207.30px;font-size:15px;line-height:15px;color:#222;white-space:nowrap;">BY</div>
<div style="position:absolute;left:1547.0px;width:600px;text-align:center;top:207.30px;font-size:15px;line-height:15px;color:#222;white-space:nowrap;">BZ</div>
<div style="position:absolute;left:0px;top:227px;width:36px;height:370px;background:#e6e6e6;"></div>
<svg style="left:0;top:0" width="1856" height="597" viewBox="0 0 1856 597"><rect x="0" y="269" width="36" height="1" fill="#ababab"/><rect x="0" y="290" width="36" height="1" fill="#ababab"/><rect x="0" y="311" width="36" height="1" fill="#ababab"/><rect x="0" y="360" width="36" height="1" fill="#ababab"/><rect x="0" y="365" width="36" height="1" fill="#ababab"/><rect x="0" y="386" width="36" height="1" fill="#ababab"/><rect x="0" y="407" width="36" height="1" fill="#ababab"/><rect x="0" y="428" width="36" height="1" fill="#ababab"/><rect x="0" y="449" width="36" height="1" fill="#ababab"/><rect x="0" y="470" width="36" height="1" fill="#ababab"/><rect x="0" y="491" width="36" height="1" fill="#ababab"/><rect x="0" y="512" width="36" height="1" fill="#ababab"/><rect x="0" y="533" width="36" height="1" fill="#ababab"/><rect x="0" y="554" width="36" height="1" fill="#ababab"/><rect x="0" y="575" width="36" height="1" fill="#ababab"/><rect x="0" y="597" width="36" height="1" fill="#ababab"/></svg>
<div style="position:absolute;left:-281.5px;width:600px;text-align:center;top:243.46px;font-size:16px;line-height:16px;color:#222;white-space:nowrap;">1</div>
<div style="position:absolute;left:-281.5px;width:600px;text-align:center;top:272.06px;font-size:16px;line-height:16px;color:#222;white-space:nowrap;">2</div>
<div style="position:absolute;left:-281.5px;width:600px;text-align:center;top:293.26px;font-size:16px;line-height:16px;color:#222;white-space:nowrap;">3</div>
<div style="position:absolute;left:-281.5px;width:600px;text-align:center;top:339.26px;font-size:16px;line-height:16px;color:#222;white-space:nowrap;">4</div>
<div style="position:absolute;left:-281.5px;width:600px;text-align:center;top:368.46px;font-size:16px;line-height:16px;color:#222;white-space:nowrap;">6</div>
<div style="position:absolute;left:-281.5px;width:600px;text-align:center;top:389.46px;font-size:16px;line-height:16px;color:#222;white-space:nowrap;">7</div>
<div style="position:absolute;left:-281.5px;width:600px;text-align:center;top:410.46px;font-size:16px;line-height:16px;color:#222;white-space:nowrap;">8</div>
<div style="position:absolute;left:-281.5px;width:600px;text-align:center;top:431.46px;font-size:16px;line-height:16px;color:#222;white-space:nowrap;">9</div>
<div style="position:absolute;left:-281.5px;width:600px;text-align:center;top:452.46px;font-size:16px;line-height:16px;color:#222;white-space:nowrap;">10</div>
<div style="position:absolute;left:-281.5px;width:600px;text-align:center;top:473.46px;font-size:16px;line-height:16px;color:#222;white-space:nowrap;">11</div>
<div style="position:absolute;left:-281.5px;width:600px;text-align:center;top:494.46px;font-size:16px;line-height:16px;color:#222;white-space:nowrap;">12</div>
<div style="position:absolute;left:-281.5px;width:600px;text-align:center;top:515.46px;font-size:16px;line-height:16px;color:#222;white-space:nowrap;">13</div>
<div style="position:absolute;left:-281.5px;width:600px;text-align:center;top:536.46px;font-size:16px;line-height:16px;color:#222;white-space:nowrap;">14</div>
<div style="position:absolute;left:-281.5px;width:600px;text-align:center;top:557.46px;font-size:16px;line-height:16px;color:#222;white-space:nowrap;">15</div>
<div style="position:absolute;left:-281.5px;width:600px;text-align:center;top:578.46px;font-size:16px;line-height:16px;color:#222;white-space:nowrap;">16</div>
<div style="position:absolute;left:60px;top:228px;width:384px;height:41px;background:#fff;"></div>
<div style="position:absolute;left:66px;top:234.42px;font-size:26.67px;line-height:26.67px;color:#000;white-space:nowrap;font-weight:bold;transform:scaleX(1.215);transform-origin:left;-webkit-text-stroke:0.9px #000;">Projektmodel</div>
<div style="position:absolute;left:924px;top:228px;width:100px;height:41px;background:#fff;"></div>
<div style="position:absolute;left:411px;width:600px;text-align:right;top:245.11px;font-size:14.4px;line-height:14.4px;color:#000;white-space:nowrap;">01-01-2021</div>
<div style="position:absolute;left:257px;top:269px;width:188px;height:22px;background:#92d050;border:1px solid #000;"></div>
<div style="position:absolute;left:51.69999999999999px;width:600px;text-align:center;top:273.16px;font-size:16px;line-height:16px;color:#000;white-space:nowrap;font-weight:bold;">Indsæt række</div>
<div style="position:absolute;left:444px;top:269px;width:227px;height:22px;background:#92d050;border:1px solid #000;"></div>
<div style="position:absolute;left:258.20000000000005px;width:600px;text-align:center;top:273.16px;font-size:16px;line-height:16px;color:#000;white-space:nowrap;font-weight:bold;">Slet markeret række</div>
<div style="position:absolute;left:712px;top:269px;width:152px;height:22px;background:#92d050;border:1px solid #000;"></div>
<div style="position:absolute;left:488.70000000000005px;width:600px;text-align:center;top:273.16px;font-size:16px;line-height:16px;color:#000;white-space:nowrap;font-weight:bold;">Ressourceark</div>
<div style="position:absolute;left:923px;top:269px;width:52px;height:22px;background:#92d050;border:1px solid #000;"></div>
<div style="position:absolute;left:649.7px;width:600px;text-align:center;top:273.16px;font-size:16px;line-height:16px;color:#000;white-space:nowrap;font-weight:bold;">SD</div>
<div style="position:absolute;left:974px;top:269px;width:52px;height:22px;background:#92d050;border:1px solid #000;"></div>
<div style="position:absolute;left:700.7px;width:600px;text-align:center;top:273.16px;font-size:16px;line-height:16px;color:#000;white-space:nowrap;font-weight:bold;">/Øk</div>
<div style="position:absolute;left:37px;top:311px;width:989px;height:50px;background:#2e75b6;border-top:1px solid #000;"></div>
<div style="position:absolute;left:-252.0px;width:600px;text-align:center;top:315.06px;font-size:16px;line-height:16px;color:#fff;white-space:nowrap;">I</div>
<div style="position:absolute;left:-219.5px;width:600px;text-align:center;top:315.06px;font-size:16px;line-height:16px;color:#fff;white-space:nowrap;">ID</div>
<div style="position:absolute;left:-159.5px;width:600px;text-align:center;top:315.06px;font-size:16px;line-height:16px;color:#fff;white-space:nowrap;">Bem</div>
<div style="position:absolute;left:-81.5px;width:600px;text-align:center;top:315.06px;font-size:16px;line-height:16px;color:#fff;white-space:nowrap;">Type</div>
<div style="position:absolute;left:51.0px;width:600px;text-align:center;top:315.06px;font-size:16px;line-height:16px;color:#fff;white-space:nowrap;">Aktivitet</div>
<div style="position:absolute;left:190.5px;width:600px;text-align:center;top:315.06px;font-size:16px;line-height:16px;color:#a9d08e;white-space:nowrap;">P-Start</div>
<div style="position:absolute;left:257.5px;width:600px;text-align:center;top:315.06px;font-size:16px;line-height:16px;color:#a9d08e;white-space:nowrap;">P-var</div>
<div style="position:absolute;left:324.5px;width:600px;text-align:center;top:315.06px;font-size:16px;line-height:16px;color:#f8cbad;white-space:nowrap;">A-Start</div>
<div style="position:absolute;left:391.5px;width:600px;text-align:center;top:315.06px;font-size:16px;line-height:16px;color:#f8cbad;white-space:nowrap;">A-Var</div>
<div style="position:absolute;left:488.0px;width:600px;text-align:center;top:315.06px;font-size:16px;line-height:16px;color:#fff;white-space:nowrap;">Ressource</div>
<div style="position:absolute;left:593.5px;width:600px;text-align:center;top:315.06px;font-size:16px;line-height:16px;color:#f8cbad;white-space:nowrap;">R-Type</div>
<div style="position:absolute;left:649.0px;width:600px;text-align:center;top:315.06px;font-size:16px;line-height:16px;color:#fff;white-space:nowrap;">Enh</div>
<div style="position:absolute;left:700.0px;width:600px;text-align:center;top:315.06px;font-size:16px;line-height:16px;color:#fff;white-space:nowrap;">%</div>
<svg style="left:0;top:0" width="1856" height="597" viewBox="0 0 1856 597"><rect x="59" y="311" width="1" height="49" fill="#000"/><rect x="101" y="311" width="1" height="49" fill="#000"/><rect x="84.5" y="342.5" width="16" height="16" fill="#f7f7f7" stroke="#c8c8c8"/><path d="M89 348.5 H96 L92.5 352.5 Z" fill="#595959"/><rect x="179" y="311" width="1" height="49" fill="#000"/><rect x="162.5" y="342.5" width="16" height="16" fill="#f7f7f7" stroke="#c8c8c8"/><path d="M167 348.5 H174 L170.5 352.5 Z" fill="#595959"/><rect x="257" y="311" width="1" height="49" fill="#000"/><rect x="240.5" y="342.5" width="16" height="16" fill="#f7f7f7" stroke="#c8c8c8"/><path d="M245 348.5 H252 L248.5 352.5 Z" fill="#595959"/><rect x="444" y="311" width="1" height="49" fill="#000"/><rect x="427.5" y="342.5" width="16" height="16" fill="#f7f7f7" stroke="#c8c8c8"/><path d="M432 348.5 H439 L435.5 352.5 Z" fill="#595959"/><rect x="536" y="311" width="1" height="49" fill="#000"/><rect x="519.5" y="342.5" width="16" height="16" fill="#f7f7f7" stroke="#c8c8c8"/><path d="M524 348.5 H531 L527.5 352.5 Z" fill="#595959"/><rect x="578" y="311" width="1" height="49" fill="#000"/><rect x="561.5" y="342.5" width="16" height="16" fill="#f7f7f7" stroke="#c8c8c8"/><path d="M566 348.5 H573 L569.5 352.5 Z" fill="#595959"/><rect x="670" y="311" width="1" height="49" fill="#000"/><rect x="653.5" y="342.5" width="16" height="16" fill="#f7f7f7" stroke="#c8c8c8"/><path d="M658 348.5 H665 L661.5 352.5 Z" fill="#595959"/><rect x="712" y="311" width="1" height="49" fill="#000"/><rect x="695.5" y="342.5" width="16" height="16" fill="#f7f7f7" stroke="#c8c8c8"/><path d="M700 348.5 H707 L703.5 352.5 Z" fill="#595959"/><rect x="863" y="311" width="1" height="49" fill="#000"/><rect x="846.5" y="342.5" width="16" height="16" fill="#f7f7f7" stroke="#c8c8c8"/><path d="M851 348.5 H858 L854.5 352.5 Z" fill="#595959"/><rect x="923" y="311" width="1" height="49" fill="#000"/><rect x="906.5" y="342.5" width="16" height="16" fill="#f7f7f7" stroke="#c8c8c8"/><path d="M911 348.5 H918 L914.5 352.5 Z" fill="#595959"/><rect x="974" y="311" width="1" height="49" fill="#000"/><rect x="957.5" y="342.5" width="16" height="16" fill="#f7f7f7" stroke="#c8c8c8"/><path d="M962 348.5 H969 L965.5 352.5 Z" fill="#595959"/><rect x="1008.5" y="342.5" width="16" height="16" fill="#f7f7f7" stroke="#c8c8c8"/><path d="M1013 348.5 H1020 L1016.5 352.5 Z" fill="#595959"/></svg>
<svg style="left:0;top:0" width="1856" height="597" viewBox="0 0 1856 597"><rect x="1025" y="290" width="32" height="71" fill="#fff"/><rect x="1056" y="290" width="32" height="71" fill="#fff"/><rect x="1087" y="290" width="32" height="71" fill="#fff"/><rect x="1118" y="290" width="32" height="71" fill="#fff"/><rect x="1149" y="290" width="32" height="71" fill="#fff"/><rect x="1180" y="290" width="32" height="71" fill="#bfbfbf"/><rect x="1211" y="290" width="32" height="71" fill="#bfbfbf"/><rect x="1242" y="290" width="32" height="71" fill="#fff"/><rect x="1273" y="290" width="32" height="71" fill="#fff"/><rect x="1304" y="290" width="32" height="71" fill="#fff"/><rect x="1335" y="290" width="32" height="71" fill="#fff"/><rect x="1366" y="290" width="32" height="71" fill="#fff"/><rect x="1397" y="290" width="32" height="71" fill="#bfbfbf"/><rect x="1428" y="290" width="32" height="71" fill="#bfbfbf"/><rect x="1459" y="290" width="32" height="71" fill="#fff"/><rect x="1490" y="290" width="32" height="71" fill="#fff"/><rect x="1521" y="290" width="32" height="71" fill="#fff"/><rect x="1552" y="290" width="32" height="71" fill="#fff"/><rect x="1583" y="290" width="32" height="71" fill="#fff"/><rect x="1614" y="290" width="32" height="71" fill="#bfbfbf"/><rect x="1645" y="290" width="32" height="71" fill="#bfbfbf"/><rect x="1676" y="290" width="32" height="71" fill="#fff"/><rect x="1707" y="290" width="32" height="71" fill="#fff"/><rect x="1738" y="290" width="32" height="71" fill="#fff"/><rect x="1769" y="290" width="32" height="71" fill="#fff"/><rect x="1800" y="290" width="32" height="71" fill="#fff"/><rect x="1831" y="290" width="32" height="71" fill="#bfbfbf"/></svg>
<div style="position:absolute;left:741.0px;width:600px;text-align:center;top:293.86px;font-size:16px;line-height:16px;color:#000;white-space:nowrap;">ma</div>
<div style="position:absolute;left:1021.0px;top:339.5px;width:40px;height:11px;line-height:11px;font-size:10.6px;text-align:center;color:#000;transform:rotate(-90deg);white-space:nowrap;">01-02</div>
<div style="position:absolute;left:772.0px;width:600px;text-align:center;top:293.86px;font-size:16px;line-height:16px;color:#000;white-space:nowrap;">ti</div>
<div style="position:absolute;left:1052.0px;top:339.5px;width:40px;height:11px;line-height:11px;font-size:10.6px;text-align:center;color:#000;transform:rotate(-90deg);white-space:nowrap;">02-02</div>
<div style="position:absolute;left:803.0px;width:600px;text-align:center;top:293.86px;font-size:16px;line-height:16px;color:#000;white-space:nowrap;">on</div>
<div style="position:absolute;left:1083.0px;top:339.5px;width:40px;height:11px;line-height:11px;font-size:10.6px;text-align:center;color:#000;transform:rotate(-90deg);white-space:nowrap;">03-02</div>
<div style="position:absolute;left:834.0px;width:600px;text-align:center;top:293.86px;font-size:16px;line-height:16px;color:#000;white-space:nowrap;">to</div>
<div style="position:absolute;left:1114.0px;top:339.5px;width:40px;height:11px;line-height:11px;font-size:10.6px;text-align:center;color:#000;transform:rotate(-90deg);white-space:nowrap;">04-02</div>
<div style="position:absolute;left:865.0px;width:600px;text-align:center;top:293.86px;font-size:16px;line-height:16px;color:#000;white-space:nowrap;">fr</div>
<div style="position:absolute;left:1145.0px;top:339.5px;width:40px;height:11px;line-height:11px;font-size:10.6px;text-align:center;color:#000;transform:rotate(-90deg);white-space:nowrap;">05-02</div>
<div style="position:absolute;left:896.0px;width:600px;text-align:center;top:293.86px;font-size:16px;line-height:16px;color:#000;white-space:nowrap;">lø</div>
<div style="position:absolute;left:1176.0px;top:339.5px;width:40px;height:11px;line-height:11px;font-size:10.6px;text-align:center;color:#000;transform:rotate(-90deg);white-space:nowrap;">06-02</div>
<div style="position:absolute;left:927.0px;width:600px;text-align:center;top:293.86px;font-size:16px;line-height:16px;color:#000;white-space:nowrap;">sø</div>
<div style="position:absolute;left:1207.0px;top:339.5px;width:40px;height:11px;line-height:11px;font-size:10.6px;text-align:center;color:#000;transform:rotate(-90deg);white-space:nowrap;">07-02</div>
<div style="position:absolute;left:958.0px;width:600px;text-align:center;top:293.86px;font-size:16px;line-height:16px;color:#000;white-space:nowrap;">ma</div>
<div style="position:absolute;left:1238.0px;top:339.5px;width:40px;height:11px;line-height:11px;font-size:10.6px;text-align:center;color:#000;transform:rotate(-90deg);white-space:nowrap;">08-02</div>
<div style="position:absolute;left:989.0px;width:600px;text-align:center;top:293.86px;font-size:16px;line-height:16px;color:#000;white-space:nowrap;">ti</div>
<div style="position:absolute;left:1269.0px;top:339.5px;width:40px;height:11px;line-height:11px;font-size:10.6px;text-align:center;color:#000;transform:rotate(-90deg);white-space:nowrap;">09-02</div>
<div style="position:absolute;left:1020.0px;width:600px;text-align:center;top:293.86px;font-size:16px;line-height:16px;color:#000;white-space:nowrap;">on</div>
<div style="position:absolute;left:1300.0px;top:339.5px;width:40px;height:11px;line-height:11px;font-size:10.6px;text-align:center;color:#000;transform:rotate(-90deg);white-space:nowrap;">10-02</div>
<div style="position:absolute;left:1051.0px;width:600px;text-align:center;top:293.86px;font-size:16px;line-height:16px;color:#000;white-space:nowrap;">to</div>
<div style="position:absolute;left:1331.0px;top:339.5px;width:40px;height:11px;line-height:11px;font-size:10.6px;text-align:center;color:#000;transform:rotate(-90deg);white-space:nowrap;">11-02</div>
<div style="position:absolute;left:1082.0px;width:600px;text-align:center;top:293.86px;font-size:16px;line-height:16px;color:#000;white-space:nowrap;">fr</div>
<div style="position:absolute;left:1362.0px;top:339.5px;width:40px;height:11px;line-height:11px;font-size:10.6px;text-align:center;color:#000;transform:rotate(-90deg);white-space:nowrap;">12-02</div>
<div style="position:absolute;left:1113.0px;width:600px;text-align:center;top:293.86px;font-size:16px;line-height:16px;color:#000;white-space:nowrap;">lø</div>
<div style="position:absolute;left:1393.0px;top:339.5px;width:40px;height:11px;line-height:11px;font-size:10.6px;text-align:center;color:#000;transform:rotate(-90deg);white-space:nowrap;">13-02</div>
<div style="position:absolute;left:1144.0px;width:600px;text-align:center;top:293.86px;font-size:16px;line-height:16px;color:#000;white-space:nowrap;">sø</div>
<div style="position:absolute;left:1424.0px;top:339.5px;width:40px;height:11px;line-height:11px;font-size:10.6px;text-align:center;color:#000;transform:rotate(-90deg);white-space:nowrap;">14-02</div>
<div style="position:absolute;left:1175.0px;width:600px;text-align:center;top:293.86px;font-size:16px;line-height:16px;color:#000;white-space:nowrap;">ma</div>
<div style="position:absolute;left:1455.0px;top:339.5px;width:40px;height:11px;line-height:11px;font-size:10.6px;text-align:center;color:#000;transform:rotate(-90deg);white-space:nowrap;">15-02</div>
<div style="position:absolute;left:1206.0px;width:600px;text-align:center;top:293.86px;font-size:16px;line-height:16px;color:#000;white-space:nowrap;">ti</div>
<div style="position:absolute;left:1486.0px;top:339.5px;width:40px;height:11px;line-height:11px;font-size:10.6px;text-align:center;color:#000;transform:rotate(-90deg);white-space:nowrap;">16-02</div>
<div style="position:absolute;left:1237.0px;width:600px;text-align:center;top:293.86px;font-size:16px;line-height:16px;color:#000;white-space:nowrap;">on</div>
<div style="position:absolute;left:1517.0px;top:339.5px;width:40px;height:11px;line-height:11px;font-size:10.6px;text-align:center;color:#000;transform:rotate(-90deg);white-space:nowrap;">17-02</div>
<div style="position:absolute;left:1268.0px;width:600px;text-align:center;top:293.86px;font-size:16px;line-height:16px;color:#000;white-space:nowrap;">to</div>
<div style="position:absolute;left:1548.0px;top:339.5px;width:40px;height:11px;line-height:11px;font-size:10.6px;text-align:center;color:#000;transform:rotate(-90deg);white-space:nowrap;">18-02</div>
<div style="position:absolute;left:1299.0px;width:600px;text-align:center;top:293.86px;font-size:16px;line-height:16px;color:#000;white-space:nowrap;">fr</div>
<div style="position:absolute;left:1579.0px;top:339.5px;width:40px;height:11px;line-height:11px;font-size:10.6px;text-align:center;color:#000;transform:rotate(-90deg);white-space:nowrap;">19-02</div>
<div style="position:absolute;left:1330.0px;width:600px;text-align:center;top:293.86px;font-size:16px;line-height:16px;color:#000;white-space:nowrap;">lø</div>
<div style="position:absolute;left:1610.0px;top:339.5px;width:40px;height:11px;line-height:11px;font-size:10.6px;text-align:center;color:#000;transform:rotate(-90deg);white-space:nowrap;">20-02</div>
<div style="position:absolute;left:1361.0px;width:600px;text-align:center;top:293.86px;font-size:16px;line-height:16px;color:#000;white-space:nowrap;">sø</div>
<div style="position:absolute;left:1641.0px;top:339.5px;width:40px;height:11px;line-height:11px;font-size:10.6px;text-align:center;color:#000;transform:rotate(-90deg);white-space:nowrap;">21-02</div>
<div style="position:absolute;left:1392.0px;width:600px;text-align:center;top:293.86px;font-size:16px;line-height:16px;color:#000;white-space:nowrap;">ma</div>
<div style="position:absolute;left:1672.0px;top:339.5px;width:40px;height:11px;line-height:11px;font-size:10.6px;text-align:center;color:#000;transform:rotate(-90deg);white-space:nowrap;">22-02</div>
<div style="position:absolute;left:1423.0px;width:600px;text-align:center;top:293.86px;font-size:16px;line-height:16px;color:#000;white-space:nowrap;">ti</div>
<div style="position:absolute;left:1703.0px;top:339.5px;width:40px;height:11px;line-height:11px;font-size:10.6px;text-align:center;color:#000;transform:rotate(-90deg);white-space:nowrap;">23-02</div>
<div style="position:absolute;left:1454.0px;width:600px;text-align:center;top:293.86px;font-size:16px;line-height:16px;color:#000;white-space:nowrap;">on</div>
<div style="position:absolute;left:1734.0px;top:339.5px;width:40px;height:11px;line-height:11px;font-size:10.6px;text-align:center;color:#000;transform:rotate(-90deg);white-space:nowrap;">24-02</div>
<div style="position:absolute;left:1485.0px;width:600px;text-align:center;top:293.86px;font-size:16px;line-height:16px;color:#000;white-space:nowrap;">to</div>
<div style="position:absolute;left:1765.0px;top:339.5px;width:40px;height:11px;line-height:11px;font-size:10.6px;text-align:center;color:#000;transform:rotate(-90deg);white-space:nowrap;">25-02</div>
<div style="position:absolute;left:1516.0px;width:600px;text-align:center;top:293.86px;font-size:16px;line-height:16px;color:#000;white-space:nowrap;">fr</div>
<div style="position:absolute;left:1796.0px;top:339.5px;width:40px;height:11px;line-height:11px;font-size:10.6px;text-align:center;color:#000;transform:rotate(-90deg);white-space:nowrap;">26-02</div>
<div style="position:absolute;left:1547.0px;width:600px;text-align:center;top:293.86px;font-size:16px;line-height:16px;color:#000;white-space:nowrap;">lø</div>
<div style="position:absolute;left:1827.0px;top:339.5px;width:40px;height:11px;line-height:11px;font-size:10.6px;text-align:center;color:#000;transform:rotate(-90deg);white-space:nowrap;">27-02</div>
<svg style="left:0;top:0" width="1856" height="597" viewBox="0 0 1856 597"><rect x="1056" y="290" width="1" height="70" fill="#000"/><rect x="1087" y="290" width="1" height="70" fill="#000"/><rect x="1118" y="290" width="1" height="70" fill="#000"/><rect x="1149" y="290" width="1" height="70" fill="#000"/><rect x="1180" y="290" width="1" height="70" fill="#000"/><rect x="1211" y="290" width="1" height="70" fill="#000"/><rect x="1242" y="290" width="1" height="70" fill="#000"/><rect x="1273" y="290" width="1" height="70" fill="#000"/><rect x="1304" y="290" width="1" height="70" fill="#000"/><rect x="1335" y="290" width="1" height="70" fill="#000"/><rect x="1366" y="290" width="1" height="70" fill="#000"/><rect x="1397" y="290" width="1" height="70" fill="#000"/><rect x="1428" y="290" width="1" height="70" fill="#000"/><rect x="1459" y="290" width="1" height="70" fill="#000"/><rect x="1490" y="290" width="1" height="70" fill="#000"/><rect x="1521" y="290" width="1" height="70" fill="#000"/><rect x="1552" y="290" width="1" height="70" fill="#000"/><rect x="1583" y="290" width="1" height="70" fill="#000"/><rect x="1614" y="290" width="1" height="70" fill="#000"/><rect x="1645" y="290" width="1" height="70" fill="#000"/><rect x="1676" y="290" width="1" height="70" fill="#000"/><rect x="1707" y="290" width="1" height="70" fill="#000"/><rect x="1738" y="290" width="1" height="70" fill="#000"/><rect x="1769" y="290" width="1" height="70" fill="#000"/><rect x="1800" y="290" width="1" height="70" fill="#000"/><rect x="1831" y="290" width="1" height="70" fill="#000"/><rect x="1862" y="290" width="1" height="70" fill="#000"/><rect x="1025" y="290" width="831" height="1" fill="#000"/><rect x="1025" y="311" width="831" height="1" fill="#000"/></svg>
<div style="position:absolute;left:37px;top:360px;width:1819px;height:5px;background:#ececec;"></div>
<div style="position:absolute;left:37px;top:360px;width:1819px;height:1px;background:#d4d4d4;"></div>
<svg style="left:0;top:0" width="1856" height="597" viewBox="0 0 1856 597"><rect x="37" y="366" width="1819" height="20" fill="#d9d9d9"/><rect x="37" y="386" width="1819" height="1" fill="#000"/><rect x="37" y="387" width="1819" height="20" fill="#e7e6e6"/><rect x="37" y="407" width="1819" height="1" fill="#000"/><rect x="37" y="408" width="1819" height="20" fill="#e7e6e6"/><rect x="37" y="428" width="1819" height="1" fill="#000"/><rect x="37" y="429" width="1819" height="20" fill="#e7e6e6"/><rect x="37" y="449" width="1819" height="1" fill="#000"/><rect x="37" y="450" width="1819" height="20" fill="#e7e6e6"/><rect x="37" y="470" width="1819" height="1" fill="#000"/><rect x="37" y="471" width="1819" height="20" fill="#e7e6e6"/><rect x="37" y="491" width="1819" height="1" fill="#000"/><rect x="37" y="492" width="1819" height="20" fill="#e7e6e6"/><rect x="37" y="512" width="1819" height="1" fill="#000"/><rect x="37" y="513" width="1819" height="20" fill="#e7e6e6"/><rect x="37" y="533" width="1819" height="1" fill="#000"/><rect x="37" y="534" width="1819" height="20" fill="#e7e6e6"/><rect x="37" y="554" width="1819" height="1" fill="#000"/><rect x="37" y="555" width="1819" height="20" fill="#e7e6e6"/><rect x="37" y="575" width="1819" height="1" fill="#000"/><rect x="37" y="365" width="1819" height="1" fill="#000"/><rect x="1335" y="387" width="31" height="20" fill="#2e75b6"/><rect x="1366" y="387" width="31" height="20" fill="#2e75b6"/><rect x="1459" y="387" width="31" height="20" fill="#2e75b6"/><rect x="1490" y="387" width="31" height="20" fill="#2e75b6"/><rect x="1521" y="387" width="31" height="20" fill="#2e75b6"/><rect x="1552" y="387" width="31" height="20" fill="#2e75b6"/><rect x="1583" y="387" width="31" height="20" fill="#2e75b6"/><rect x="1676" y="387" width="31" height="20" fill="#2e75b6"/><rect x="1335" y="408" width="31" height="20" fill="#2e75b6"/><rect x="1521" y="429" width="31" height="20" fill="#2e75b6"/><rect x="1552" y="429" width="31" height="20" fill="#2e75b6"/><rect x="1583" y="429" width="31" height="20" fill="#2e75b6"/><rect x="1676" y="429" width="31" height="20" fill="#2e75b6"/><rect x="1707" y="429" width="31" height="20" fill="#2e75b6"/><rect x="1738" y="429" width="31" height="20" fill="#2e75b6"/><rect x="1676" y="450" width="31" height="20" fill="#2e75b6"/><rect x="1707" y="450" width="31" height="20" fill="#2e75b6"/><rect x="1738" y="450" width="31" height="20" fill="#2e75b6"/><rect x="1769" y="450" width="31" height="20" fill="#2e75b6"/><rect x="1800" y="450" width="31" height="20" fill="#2e75b6"/><rect x="1707" y="471" width="31" height="20" fill="#2e75b6"/><rect x="1738" y="471" width="31" height="20" fill="#2e75b6"/><rect x="1769" y="471" width="31" height="20" fill="#2e75b6"/><rect x="1800" y="471" width="31" height="20" fill="#2e75b6"/></svg>
<div style="position:absolute;left:763px;width:600px;text-align:right;top:390.65px;font-size:14px;line-height:14px;color:#fff;white-space:nowrap;">&gt;</div>
<div style="position:absolute;left:794px;width:600px;text-align:right;top:390.65px;font-size:14px;line-height:14px;color:#fff;white-space:nowrap;">&gt;</div>
<div style="position:absolute;left:825px;width:600px;text-align:right;top:390.65px;font-size:14px;line-height:14px;color:#fff;white-space:nowrap;">&gt;</div>
<div style="position:absolute;left:856px;width:600px;text-align:right;top:390.65px;font-size:14px;line-height:14px;color:#fff;white-space:nowrap;">&gt;</div>
<div style="position:absolute;left:887px;width:600px;text-align:right;top:390.65px;font-size:14px;line-height:14px;color:#fff;white-space:nowrap;">&gt;</div>
<div style="position:absolute;left:918px;width:600px;text-align:right;top:390.65px;font-size:14px;line-height:14px;color:#fff;white-space:nowrap;">&gt;</div>
<div style="position:absolute;left:-502px;width:600px;text-align:right;top:369.16px;font-size:16px;line-height:16px;color:#fff;white-space:nowrap;">1</div>
<div style="position:absolute;left:261px;top:369.16px;font-size:16px;line-height:16px;color:#fff;white-space:nowrap;">Test 1</div>
<div style="position:absolute;left:-68px;width:600px;text-align:right;top:369.16px;font-size:16px;line-height:16px;color:#fff;white-space:nowrap;">11-02-2021</div>
<div style="position:absolute;left:-24.5px;width:600px;text-align:right;top:369.16px;font-size:16px;line-height:16px;color:#fff;white-space:nowrap;">4</div>
<div style="position:absolute;left:66px;width:600px;text-align:right;top:369.16px;font-size:16px;line-height:16px;color:#fff;white-space:nowrap;">11-02-2021</div>
<div style="position:absolute;left:109.5px;width:600px;text-align:right;top:369.16px;font-size:16px;line-height:16px;color:#fff;white-space:nowrap;">4</div>
<div style="position:absolute;left:716px;top:369.16px;font-size:16px;line-height:16px;color:#fff;white-space:nowrap;">Hansen</div>
<div style="position:absolute;left:867px;top:369.16px;font-size:16px;line-height:16px;color:#fff;white-space:nowrap;">Ekstern</div>
<div style="position:absolute;left:371px;width:600px;text-align:right;top:369.16px;font-size:16px;line-height:16px;color:#fff;white-space:nowrap;">1</div>
<div style="position:absolute;left:422px;width:600px;text-align:right;top:369.16px;font-size:16px;line-height:16px;color:#fff;white-space:nowrap;">100%</div>
<div style="position:absolute;left:-502px;width:600px;text-align:right;top:390.16px;font-size:16px;line-height:16px;color:#000;white-space:nowrap;">2</div>
<div style="position:absolute;left:261px;top:390.16px;font-size:16px;line-height:16px;color:#000;white-space:nowrap;">Test 2</div>
<div style="position:absolute;left:-68px;width:600px;text-align:right;top:390.16px;font-size:16px;line-height:16px;color:#000;white-space:nowrap;">11-02-2021</div>
<div style="position:absolute;left:-24.5px;width:600px;text-align:right;top:390.16px;font-size:16px;line-height:16px;color:#000;white-space:nowrap;">8</div>
<div style="position:absolute;left:66px;width:600px;text-align:right;top:390.16px;font-size:16px;line-height:16px;color:#e00000;white-space:nowrap;">11-02-2021</div>
<div style="position:absolute;left:109.5px;width:600px;text-align:right;top:390.16px;font-size:16px;line-height:16px;color:#e00000;white-space:nowrap;">8</div>
<div style="position:absolute;left:716px;top:390.16px;font-size:16px;line-height:16px;color:#000;white-space:nowrap;">Nielsen</div>
<div style="position:absolute;left:867px;top:390.16px;font-size:16px;line-height:16px;color:#000;white-space:nowrap;">Intern</div>
<div style="position:absolute;left:371px;width:600px;text-align:right;top:390.16px;font-size:16px;line-height:16px;color:#000;white-space:nowrap;">1</div>
<div style="position:absolute;left:422px;width:600px;text-align:right;top:390.16px;font-size:16px;line-height:16px;color:#000;white-space:nowrap;">50%</div>
<div style="position:absolute;left:-502px;width:600px;text-align:right;top:411.16px;font-size:16px;line-height:16px;color:#000;white-space:nowrap;">3</div>
<div style="position:absolute;left:261px;top:411.16px;font-size:16px;line-height:16px;color:#000;white-space:nowrap;">Test 3</div>
<div style="position:absolute;left:-68px;width:600px;text-align:right;top:411.16px;font-size:16px;line-height:16px;color:#000;white-space:nowrap;">11-02-2021</div>
<div style="position:absolute;left:-24.5px;width:600px;text-align:right;top:411.16px;font-size:16px;line-height:16px;color:#000;white-space:nowrap;">1</div>
<div style="position:absolute;left:66px;width:600px;text-align:right;top:411.16px;font-size:16px;line-height:16px;color:#e00000;white-space:nowrap;">11-02-2021</div>
<div style="position:absolute;left:109.5px;width:600px;text-align:right;top:411.16px;font-size:16px;line-height:16px;color:#e00000;white-space:nowrap;">1</div>
<div style="position:absolute;left:716px;top:411.16px;font-size:16px;line-height:16px;color:#000;white-space:nowrap;">Projektleder</div>
<div style="position:absolute;left:867px;top:411.16px;font-size:16px;line-height:16px;color:#000;white-space:nowrap;">Intern</div>
<div style="position:absolute;left:371px;width:600px;text-align:right;top:411.16px;font-size:16px;line-height:16px;color:#000;white-space:nowrap;">2</div>
<div style="position:absolute;left:-502px;width:600px;text-align:right;top:432.16px;font-size:16px;line-height:16px;color:#000;white-space:nowrap;">4</div>
<div style="position:absolute;left:261px;top:432.16px;font-size:16px;line-height:16px;color:#000;white-space:nowrap;">Test 4</div>
<div style="position:absolute;left:-68px;width:600px;text-align:right;top:432.16px;font-size:16px;line-height:16px;color:#000;white-space:nowrap;">17-02-2021</div>
<div style="position:absolute;left:-24.5px;width:600px;text-align:right;top:432.16px;font-size:16px;line-height:16px;color:#000;white-space:nowrap;">6</div>
<div style="position:absolute;left:66px;width:600px;text-align:right;top:432.16px;font-size:16px;line-height:16px;color:#e00000;white-space:nowrap;">17-02-2021</div>
<div style="position:absolute;left:109.5px;width:600px;text-align:right;top:432.16px;font-size:16px;line-height:16px;color:#e00000;white-space:nowrap;">6</div>
<div style="position:absolute;left:716px;top:432.16px;font-size:16px;line-height:16px;color:#000;white-space:nowrap;">Larsen</div>
<div style="position:absolute;left:867px;top:432.16px;font-size:16px;line-height:16px;color:#000;white-space:nowrap;">Intern</div>
<div style="position:absolute;left:371px;width:600px;text-align:right;top:432.16px;font-size:16px;line-height:16px;color:#000;white-space:nowrap;">1</div>
<div style="position:absolute;left:-502px;width:600px;text-align:right;top:453.16px;font-size:16px;line-height:16px;color:#000;white-space:nowrap;">5</div>
<div style="position:absolute;left:261px;top:453.16px;font-size:16px;line-height:16px;color:#000;white-space:nowrap;">Test 5</div>
<div style="position:absolute;left:-68px;width:600px;text-align:right;top:453.16px;font-size:16px;line-height:16px;color:#000;white-space:nowrap;">22-02-2021</div>
<div style="position:absolute;left:-24.5px;width:600px;text-align:right;top:453.16px;font-size:16px;line-height:16px;color:#000;white-space:nowrap;">10</div>
<div style="position:absolute;left:66px;width:600px;text-align:right;top:453.16px;font-size:16px;line-height:16px;color:#e00000;white-space:nowrap;">22-02-2021</div>
<div style="position:absolute;left:109.5px;width:600px;text-align:right;top:453.16px;font-size:16px;line-height:16px;color:#e00000;white-space:nowrap;">10</div>
<div style="position:absolute;left:716px;top:453.16px;font-size:16px;line-height:16px;color:#000;white-space:nowrap;">Projektleder</div>
<div style="position:absolute;left:867px;top:453.16px;font-size:16px;line-height:16px;color:#000;white-space:nowrap;">Intern</div>
<div style="position:absolute;left:371px;width:600px;text-align:right;top:453.16px;font-size:16px;line-height:16px;color:#000;white-space:nowrap;">1</div>
<div style="position:absolute;left:-502px;width:600px;text-align:right;top:474.16px;font-size:16px;line-height:16px;color:#000;white-space:nowrap;">6</div>
<div style="position:absolute;left:261px;top:474.16px;font-size:16px;line-height:16px;color:#000;white-space:nowrap;">Test 6</div>
<div style="position:absolute;left:-68px;width:600px;text-align:right;top:474.16px;font-size:16px;line-height:16px;color:#000;white-space:nowrap;">23-02-2021</div>
<div style="position:absolute;left:-24.5px;width:600px;text-align:right;top:474.16px;font-size:16px;line-height:16px;color:#000;white-space:nowrap;">9</div>
<div style="position:absolute;left:66px;width:600px;text-align:right;top:474.16px;font-size:16px;line-height:16px;color:#e00000;white-space:nowrap;">23-02-2021</div>
<div style="position:absolute;left:109.5px;width:600px;text-align:right;top:474.16px;font-size:16px;line-height:16px;color:#e00000;white-space:nowrap;">9</div>
<div style="position:absolute;left:716px;top:474.16px;font-size:16px;line-height:16px;color:#000;white-space:nowrap;">Hansen</div>
<div style="position:absolute;left:867px;top:474.16px;font-size:16px;line-height:16px;color:#000;white-space:nowrap;">Ekstern</div>
<div style="position:absolute;left:371px;width:600px;text-align:right;top:474.16px;font-size:16px;line-height:16px;color:#000;white-space:nowrap;">2</div>
<div style="position:absolute;left:-502px;width:600px;text-align:right;top:495.16px;font-size:16px;line-height:16px;color:#000;white-space:nowrap;">7</div>
<div style="position:absolute;left:261px;top:495.16px;font-size:16px;line-height:16px;color:#000;white-space:nowrap;">Test 7</div>
<div style="position:absolute;left:-68px;width:600px;text-align:right;top:495.16px;font-size:16px;line-height:16px;color:#000;white-space:nowrap;">05-03-2021</div>
<div style="position:absolute;left:-24.5px;width:600px;text-align:right;top:495.16px;font-size:16px;line-height:16px;color:#000;white-space:nowrap;">4</div>
<div style="position:absolute;left:66px;width:600px;text-align:right;top:495.16px;font-size:16px;line-height:16px;color:#e00000;white-space:nowrap;">05-03-2021</div>
<div style="position:absolute;left:109.5px;width:600px;text-align:right;top:495.16px;font-size:16px;line-height:16px;color:#e00000;white-space:nowrap;">4</div>
<div style="position:absolute;left:716px;top:495.16px;font-size:16px;line-height:16px;color:#000;white-space:nowrap;">Nielsen</div>
<div style="position:absolute;left:867px;top:495.16px;font-size:16px;line-height:16px;color:#000;white-space:nowrap;">Intern</div>
<div style="position:absolute;left:371px;width:600px;text-align:right;top:495.16px;font-size:16px;line-height:16px;color:#000;white-space:nowrap;">1</div>
<div style="position:absolute;left:-502px;width:600px;text-align:right;top:516.16px;font-size:16px;line-height:16px;color:#000;white-space:nowrap;">8</div>
<div style="position:absolute;left:261px;top:516.16px;font-size:16px;line-height:16px;color:#000;white-space:nowrap;">Test 8</div>
<div style="position:absolute;left:-68px;width:600px;text-align:right;top:516.16px;font-size:16px;line-height:16px;color:#000;white-space:nowrap;">04-03-2021</div>
<div style="position:absolute;left:-24.5px;width:600px;text-align:right;top:516.16px;font-size:16px;line-height:16px;color:#000;white-space:nowrap;">6</div>
<div style="position:absolute;left:66px;width:600px;text-align:right;top:516.16px;font-size:16px;line-height:16px;color:#e00000;white-space:nowrap;">04-03-2021</div>
<div style="position:absolute;left:109.5px;width:600px;text-align:right;top:516.16px;font-size:16px;line-height:16px;color:#e00000;white-space:nowrap;">6</div>
<div style="position:absolute;left:716px;top:516.16px;font-size:16px;line-height:16px;color:#000;white-space:nowrap;">Larsen</div>
<div style="position:absolute;left:867px;top:516.16px;font-size:16px;line-height:16px;color:#000;white-space:nowrap;">Intern</div>
<div style="position:absolute;left:371px;width:600px;text-align:right;top:516.16px;font-size:16px;line-height:16px;color:#000;white-space:nowrap;">1</div>
<div style="position:absolute;left:-502px;width:600px;text-align:right;top:537.16px;font-size:16px;line-height:16px;color:#000;white-space:nowrap;">9</div>
<div style="position:absolute;left:261px;top:537.16px;font-size:16px;line-height:16px;color:#000;white-space:nowrap;">Test 9</div>
<div style="position:absolute;left:-68px;width:600px;text-align:right;top:537.16px;font-size:16px;line-height:16px;color:#000;white-space:nowrap;">08-03-2021</div>
<div style="position:absolute;left:-24.5px;width:600px;text-align:right;top:537.16px;font-size:16px;line-height:16px;color:#000;white-space:nowrap;">4</div>
<div style="position:absolute;left:66px;width:600px;text-align:right;top:537.16px;font-size:16px;line-height:16px;color:#e00000;white-space:nowrap;">08-03-2021</div>
<div style="position:absolute;left:109.5px;width:600px;text-align:right;top:537.16px;font-size:16px;line-height:16px;color:#e00000;white-space:nowrap;">4</div>
<div style="position:absolute;left:716px;top:537.16px;font-size:16px;line-height:16px;color:#000;white-space:nowrap;">Hansen</div>
<div style="position:absolute;left:867px;top:537.16px;font-size:16px;line-height:16px;color:#000;white-space:nowrap;">Ekstern</div>
<div style="position:absolute;left:371px;width:600px;text-align:right;top:537.16px;font-size:16px;line-height:16px;color:#000;white-space:nowrap;">1</div>
<div style="position:absolute;left:-502px;width:600px;text-align:right;top:558.16px;font-size:16px;line-height:16px;color:#000;white-space:nowrap;">10</div>
<div style="position:absolute;left:261px;top:558.16px;font-size:16px;line-height:16px;color:#000;white-space:nowrap;">Test 10</div>
<div style="position:absolute;left:-68px;width:600px;text-align:right;top:558.16px;font-size:16px;line-height:16px;color:#000;white-space:nowrap;">12-03-2021</div>
<div style="position:absolute;left:-24.5px;width:600px;text-align:right;top:558.16px;font-size:16px;line-height:16px;color:#000;white-space:nowrap;">3</div>
<div style="position:absolute;left:66px;width:600px;text-align:right;top:558.16px;font-size:16px;line-height:16px;color:#e00000;white-space:nowrap;">12-03-2021</div>
<div style="position:absolute;left:109.5px;width:600px;text-align:right;top:558.16px;font-size:16px;line-height:16px;color:#e00000;white-space:nowrap;">3</div>
<div style="position:absolute;left:716px;top:558.16px;font-size:16px;line-height:16px;color:#000;white-space:nowrap;">Nielsen</div>
<div style="position:absolute;left:867px;top:558.16px;font-size:16px;line-height:16px;color:#000;white-space:nowrap;">Intern</div>
<div style="position:absolute;left:371px;width:600px;text-align:right;top:558.16px;font-size:16px;line-height:16px;color:#000;white-space:nowrap;">1</div>
<svg style="left:0;top:0" width="120" height="420" viewBox="0 0 120 420"><path d="M45 375.5 L47.8 379 L53.8 371" stroke="#fff" stroke-width="1.2" fill="none"/><path d="M44 391 L53.5 397 L44 402 L47 397 Z" fill="#000"/><path d="M44 391 L53.5 397 L47 397 Z" fill="#fff" stroke="#000" stroke-width=".5"/></svg>
<div style="position:absolute;left:1025px;top:227px;width:1px;height:370px;background:#9b9b9b;"></div>
</body></html>
